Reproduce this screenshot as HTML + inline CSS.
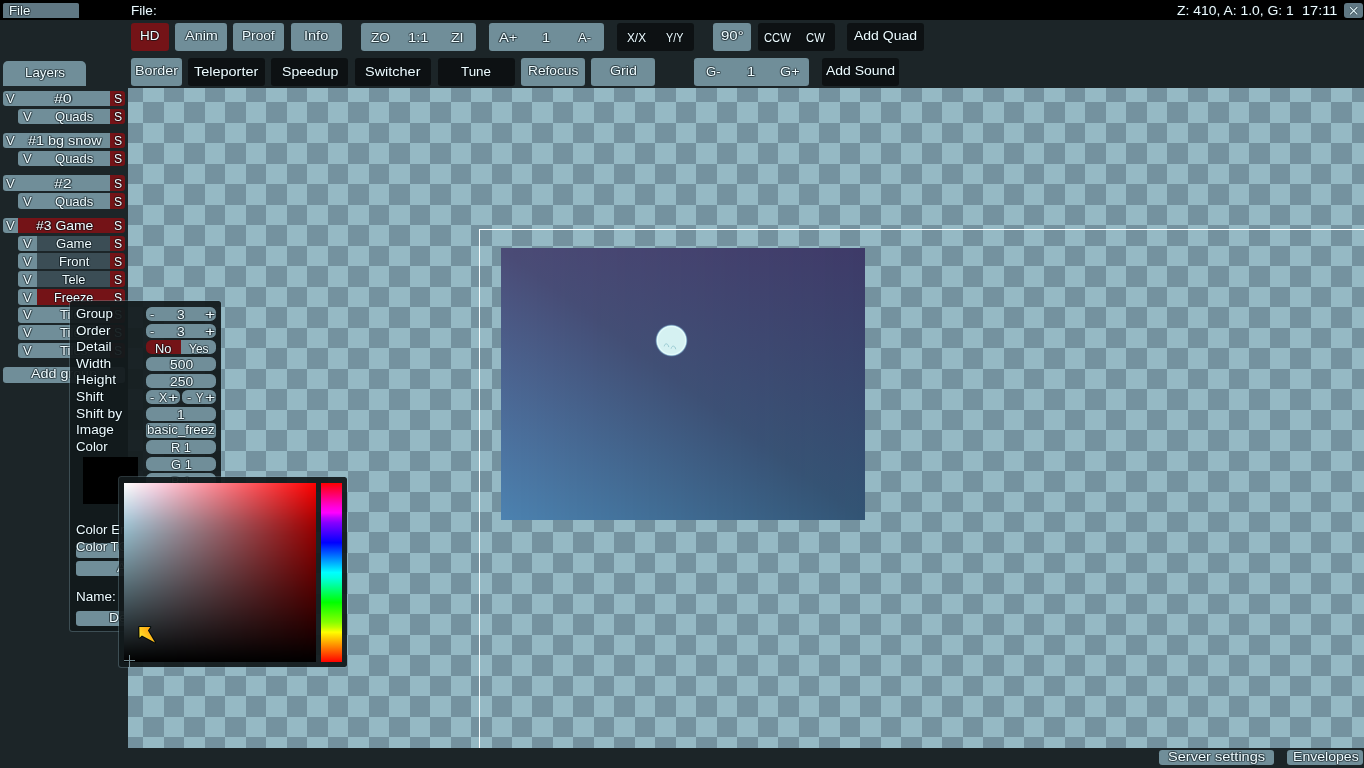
<!DOCTYPE html>
<html lang="en"><head><meta charset="utf-8"><title>DDNet Editor</title><style>
html,body{margin:0;padding:0}
body{width:1364px;height:768px;overflow:hidden;background:#1c2528;position:relative;font-family:"Liberation Sans",sans-serif}
div,span,svg{position:absolute;box-sizing:border-box}
.t{white-space:pre;line-height:15px;color:#eefcff;transform-origin:0 50%;text-shadow:1px 0 0 rgba(8,16,20,.34),-1px 0 0 rgba(8,16,20,.34),0 1px 0 rgba(8,16,20,.34),0 -1px 0 rgba(8,16,20,.34),1px 1px 0 rgba(8,16,20,.22),-1px -1px 0 rgba(8,16,20,.22),1px -1px 0 rgba(8,16,20,.22),-1px 1px 0 rgba(8,16,20,.22)}
.pop{background:rgba(18,25,28,.94);border:1px solid rgba(140,175,190,.30);border-radius:3.5px;background-clip:padding-box}
</style></head>
<body>
<div id="cv" style="left:128px;top:88px;width:1236px;height:660px;background:#95b9c4;overflow:hidden"><svg style="left:0;top:0" width="1236" height="660" shape-rendering="crispEdges"><path fill="#74929f" d="M0 0h15v14h-15zM36 0h20v14h-20zM77 0h20v14h-20zM118 0h20v14h-20zM159 0h20v14h-20zM200 0h20v14h-20zM241 0h20v14h-20zM282 0h20v14h-20zM323 0h20v14h-20zM364 0h20v14h-20zM404 0h21v14h-21zM445 0h21v14h-21zM486 0h21v14h-21zM527 0h21v14h-21zM568 0h21v14h-21zM609 0h21v14h-21zM650 0h21v14h-21zM691 0h21v14h-21zM732 0h21v14h-21zM773 0h21v14h-21zM814 0h21v14h-21zM855 0h21v14h-21zM896 0h20v14h-20zM937 0h20v14h-20zM978 0h20v14h-20zM1019 0h20v14h-20zM1060 0h20v14h-20zM1101 0h20v14h-20zM1142 0h20v14h-20zM1183 0h20v14h-20zM1224 0h12v14h-12zM15 14h21v21h-21zM56 14h21v21h-21zM97 14h21v21h-21zM138 14h21v21h-21zM179 14h21v21h-21zM220 14h21v21h-21zM261 14h21v21h-21zM302 14h21v21h-21zM343 14h21v21h-21zM384 14h20v21h-20zM425 14h20v21h-20zM466 14h20v21h-20zM507 14h20v21h-20zM548 14h20v21h-20zM589 14h20v21h-20zM630 14h20v21h-20zM671 14h20v21h-20zM712 14h20v21h-20zM753 14h20v21h-20zM794 14h20v21h-20zM835 14h20v21h-20zM876 14h20v21h-20zM916 14h21v21h-21zM957 14h21v21h-21zM998 14h21v21h-21zM1039 14h21v21h-21zM1080 14h21v21h-21zM1121 14h21v21h-21zM1162 14h21v21h-21zM1203 14h21v21h-21zM0 35h15v20h-15zM36 35h20v20h-20zM77 35h20v20h-20zM118 35h20v20h-20zM159 35h20v20h-20zM200 35h20v20h-20zM241 35h20v20h-20zM282 35h20v20h-20zM323 35h20v20h-20zM364 35h20v20h-20zM404 35h21v20h-21zM445 35h21v20h-21zM486 35h21v20h-21zM527 35h21v20h-21zM568 35h21v20h-21zM609 35h21v20h-21zM650 35h21v20h-21zM691 35h21v20h-21zM732 35h21v20h-21zM773 35h21v20h-21zM814 35h21v20h-21zM855 35h21v20h-21zM896 35h20v20h-20zM937 35h20v20h-20zM978 35h20v20h-20zM1019 35h20v20h-20zM1060 35h20v20h-20zM1101 35h20v20h-20zM1142 35h20v20h-20zM1183 35h20v20h-20zM1224 35h12v20h-12zM15 55h21v21h-21zM56 55h21v21h-21zM97 55h21v21h-21zM138 55h21v21h-21zM179 55h21v21h-21zM220 55h21v21h-21zM261 55h21v21h-21zM302 55h21v21h-21zM343 55h21v21h-21zM384 55h20v21h-20zM425 55h20v21h-20zM466 55h20v21h-20zM507 55h20v21h-20zM548 55h20v21h-20zM589 55h20v21h-20zM630 55h20v21h-20zM671 55h20v21h-20zM712 55h20v21h-20zM753 55h20v21h-20zM794 55h20v21h-20zM835 55h20v21h-20zM876 55h20v21h-20zM916 55h21v21h-21zM957 55h21v21h-21zM998 55h21v21h-21zM1039 55h21v21h-21zM1080 55h21v21h-21zM1121 55h21v21h-21zM1162 55h21v21h-21zM1203 55h21v21h-21zM0 76h15v20h-15zM36 76h20v20h-20zM77 76h20v20h-20zM118 76h20v20h-20zM159 76h20v20h-20zM200 76h20v20h-20zM241 76h20v20h-20zM282 76h20v20h-20zM323 76h20v20h-20zM364 76h20v20h-20zM404 76h21v20h-21zM445 76h21v20h-21zM486 76h21v20h-21zM527 76h21v20h-21zM568 76h21v20h-21zM609 76h21v20h-21zM650 76h21v20h-21zM691 76h21v20h-21zM732 76h21v20h-21zM773 76h21v20h-21zM814 76h21v20h-21zM855 76h21v20h-21zM896 76h20v20h-20zM937 76h20v20h-20zM978 76h20v20h-20zM1019 76h20v20h-20zM1060 76h20v20h-20zM1101 76h20v20h-20zM1142 76h20v20h-20zM1183 76h20v20h-20zM1224 76h12v20h-12zM15 96h21v21h-21zM56 96h21v21h-21zM97 96h21v21h-21zM138 96h21v21h-21zM179 96h21v21h-21zM220 96h21v21h-21zM261 96h21v21h-21zM302 96h21v21h-21zM343 96h21v21h-21zM384 96h20v21h-20zM425 96h20v21h-20zM466 96h20v21h-20zM507 96h20v21h-20zM548 96h20v21h-20zM589 96h20v21h-20zM630 96h20v21h-20zM671 96h20v21h-20zM712 96h20v21h-20zM753 96h20v21h-20zM794 96h20v21h-20zM835 96h20v21h-20zM876 96h20v21h-20zM916 96h21v21h-21zM957 96h21v21h-21zM998 96h21v21h-21zM1039 96h21v21h-21zM1080 96h21v21h-21zM1121 96h21v21h-21zM1162 96h21v21h-21zM1203 96h21v21h-21zM0 117h15v20h-15zM36 117h20v20h-20zM77 117h20v20h-20zM118 117h20v20h-20zM159 117h20v20h-20zM200 117h20v20h-20zM241 117h20v20h-20zM282 117h20v20h-20zM323 117h20v20h-20zM364 117h20v20h-20zM404 117h21v20h-21zM445 117h21v20h-21zM486 117h21v20h-21zM527 117h21v20h-21zM568 117h21v20h-21zM609 117h21v20h-21zM650 117h21v20h-21zM691 117h21v20h-21zM732 117h21v20h-21zM773 117h21v20h-21zM814 117h21v20h-21zM855 117h21v20h-21zM896 117h20v20h-20zM937 117h20v20h-20zM978 117h20v20h-20zM1019 117h20v20h-20zM1060 117h20v20h-20zM1101 117h20v20h-20zM1142 117h20v20h-20zM1183 117h20v20h-20zM1224 117h12v20h-12zM15 137h21v21h-21zM56 137h21v21h-21zM97 137h21v21h-21zM138 137h21v21h-21zM179 137h21v21h-21zM220 137h21v21h-21zM261 137h21v21h-21zM302 137h21v21h-21zM343 137h21v21h-21zM384 137h20v21h-20zM425 137h20v21h-20zM466 137h20v21h-20zM507 137h20v21h-20zM548 137h20v21h-20zM589 137h20v21h-20zM630 137h20v21h-20zM671 137h20v21h-20zM712 137h20v21h-20zM753 137h20v21h-20zM794 137h20v21h-20zM835 137h20v21h-20zM876 137h20v21h-20zM916 137h21v21h-21zM957 137h21v21h-21zM998 137h21v21h-21zM1039 137h21v21h-21zM1080 137h21v21h-21zM1121 137h21v21h-21zM1162 137h21v21h-21zM1203 137h21v21h-21zM0 158h15v20h-15zM36 158h20v20h-20zM77 158h20v20h-20zM118 158h20v20h-20zM159 158h20v20h-20zM200 158h20v20h-20zM241 158h20v20h-20zM282 158h20v20h-20zM323 158h20v20h-20zM364 158h20v20h-20zM404 158h21v20h-21zM445 158h21v20h-21zM486 158h21v20h-21zM527 158h21v20h-21zM568 158h21v20h-21zM609 158h21v20h-21zM650 158h21v20h-21zM691 158h21v20h-21zM732 158h21v20h-21zM773 158h21v20h-21zM814 158h21v20h-21zM855 158h21v20h-21zM896 158h20v20h-20zM937 158h20v20h-20zM978 158h20v20h-20zM1019 158h20v20h-20zM1060 158h20v20h-20zM1101 158h20v20h-20zM1142 158h20v20h-20zM1183 158h20v20h-20zM1224 158h12v20h-12zM15 178h21v21h-21zM56 178h21v21h-21zM97 178h21v21h-21zM138 178h21v21h-21zM179 178h21v21h-21zM220 178h21v21h-21zM261 178h21v21h-21zM302 178h21v21h-21zM343 178h21v21h-21zM384 178h20v21h-20zM425 178h20v21h-20zM466 178h20v21h-20zM507 178h20v21h-20zM548 178h20v21h-20zM589 178h20v21h-20zM630 178h20v21h-20zM671 178h20v21h-20zM712 178h20v21h-20zM753 178h20v21h-20zM794 178h20v21h-20zM835 178h20v21h-20zM876 178h20v21h-20zM916 178h21v21h-21zM957 178h21v21h-21zM998 178h21v21h-21zM1039 178h21v21h-21zM1080 178h21v21h-21zM1121 178h21v21h-21zM1162 178h21v21h-21zM1203 178h21v21h-21zM0 199h15v20h-15zM36 199h20v20h-20zM77 199h20v20h-20zM118 199h20v20h-20zM159 199h20v20h-20zM200 199h20v20h-20zM241 199h20v20h-20zM282 199h20v20h-20zM323 199h20v20h-20zM364 199h20v20h-20zM404 199h21v20h-21zM445 199h21v20h-21zM486 199h21v20h-21zM527 199h21v20h-21zM568 199h21v20h-21zM609 199h21v20h-21zM650 199h21v20h-21zM691 199h21v20h-21zM732 199h21v20h-21zM773 199h21v20h-21zM814 199h21v20h-21zM855 199h21v20h-21zM896 199h20v20h-20zM937 199h20v20h-20zM978 199h20v20h-20zM1019 199h20v20h-20zM1060 199h20v20h-20zM1101 199h20v20h-20zM1142 199h20v20h-20zM1183 199h20v20h-20zM1224 199h12v20h-12zM15 219h21v21h-21zM56 219h21v21h-21zM97 219h21v21h-21zM138 219h21v21h-21zM179 219h21v21h-21zM220 219h21v21h-21zM261 219h21v21h-21zM302 219h21v21h-21zM343 219h21v21h-21zM384 219h20v21h-20zM425 219h20v21h-20zM466 219h20v21h-20zM507 219h20v21h-20zM548 219h20v21h-20zM589 219h20v21h-20zM630 219h20v21h-20zM671 219h20v21h-20zM712 219h20v21h-20zM753 219h20v21h-20zM794 219h20v21h-20zM835 219h20v21h-20zM876 219h20v21h-20zM916 219h21v21h-21zM957 219h21v21h-21zM998 219h21v21h-21zM1039 219h21v21h-21zM1080 219h21v21h-21zM1121 219h21v21h-21zM1162 219h21v21h-21zM1203 219h21v21h-21zM0 240h15v20h-15zM36 240h20v20h-20zM77 240h20v20h-20zM118 240h20v20h-20zM159 240h20v20h-20zM200 240h20v20h-20zM241 240h20v20h-20zM282 240h20v20h-20zM323 240h20v20h-20zM364 240h20v20h-20zM404 240h21v20h-21zM445 240h21v20h-21zM486 240h21v20h-21zM527 240h21v20h-21zM568 240h21v20h-21zM609 240h21v20h-21zM650 240h21v20h-21zM691 240h21v20h-21zM732 240h21v20h-21zM773 240h21v20h-21zM814 240h21v20h-21zM855 240h21v20h-21zM896 240h20v20h-20zM937 240h20v20h-20zM978 240h20v20h-20zM1019 240h20v20h-20zM1060 240h20v20h-20zM1101 240h20v20h-20zM1142 240h20v20h-20zM1183 240h20v20h-20zM1224 240h12v20h-12zM15 260h21v21h-21zM56 260h21v21h-21zM97 260h21v21h-21zM138 260h21v21h-21zM179 260h21v21h-21zM220 260h21v21h-21zM261 260h21v21h-21zM302 260h21v21h-21zM343 260h21v21h-21zM384 260h20v21h-20zM425 260h20v21h-20zM466 260h20v21h-20zM507 260h20v21h-20zM548 260h20v21h-20zM589 260h20v21h-20zM630 260h20v21h-20zM671 260h20v21h-20zM712 260h20v21h-20zM753 260h20v21h-20zM794 260h20v21h-20zM835 260h20v21h-20zM876 260h20v21h-20zM916 260h21v21h-21zM957 260h21v21h-21zM998 260h21v21h-21zM1039 260h21v21h-21zM1080 260h21v21h-21zM1121 260h21v21h-21zM1162 260h21v21h-21zM1203 260h21v21h-21zM0 281h15v20h-15zM36 281h20v20h-20zM77 281h20v20h-20zM118 281h20v20h-20zM159 281h20v20h-20zM200 281h20v20h-20zM241 281h20v20h-20zM282 281h20v20h-20zM323 281h20v20h-20zM364 281h20v20h-20zM404 281h21v20h-21zM445 281h21v20h-21zM486 281h21v20h-21zM527 281h21v20h-21zM568 281h21v20h-21zM609 281h21v20h-21zM650 281h21v20h-21zM691 281h21v20h-21zM732 281h21v20h-21zM773 281h21v20h-21zM814 281h21v20h-21zM855 281h21v20h-21zM896 281h20v20h-20zM937 281h20v20h-20zM978 281h20v20h-20zM1019 281h20v20h-20zM1060 281h20v20h-20zM1101 281h20v20h-20zM1142 281h20v20h-20zM1183 281h20v20h-20zM1224 281h12v20h-12zM15 301h21v21h-21zM56 301h21v21h-21zM97 301h21v21h-21zM138 301h21v21h-21zM179 301h21v21h-21zM220 301h21v21h-21zM261 301h21v21h-21zM302 301h21v21h-21zM343 301h21v21h-21zM384 301h20v21h-20zM425 301h20v21h-20zM466 301h20v21h-20zM507 301h20v21h-20zM548 301h20v21h-20zM589 301h20v21h-20zM630 301h20v21h-20zM671 301h20v21h-20zM712 301h20v21h-20zM753 301h20v21h-20zM794 301h20v21h-20zM835 301h20v21h-20zM876 301h20v21h-20zM916 301h21v21h-21zM957 301h21v21h-21zM998 301h21v21h-21zM1039 301h21v21h-21zM1080 301h21v21h-21zM1121 301h21v21h-21zM1162 301h21v21h-21zM1203 301h21v21h-21zM0 322h15v20h-15zM36 322h20v20h-20zM77 322h20v20h-20zM118 322h20v20h-20zM159 322h20v20h-20zM200 322h20v20h-20zM241 322h20v20h-20zM282 322h20v20h-20zM323 322h20v20h-20zM364 322h20v20h-20zM404 322h21v20h-21zM445 322h21v20h-21zM486 322h21v20h-21zM527 322h21v20h-21zM568 322h21v20h-21zM609 322h21v20h-21zM650 322h21v20h-21zM691 322h21v20h-21zM732 322h21v20h-21zM773 322h21v20h-21zM814 322h21v20h-21zM855 322h21v20h-21zM896 322h20v20h-20zM937 322h20v20h-20zM978 322h20v20h-20zM1019 322h20v20h-20zM1060 322h20v20h-20zM1101 322h20v20h-20zM1142 322h20v20h-20zM1183 322h20v20h-20zM1224 322h12v20h-12zM15 342h21v21h-21zM56 342h21v21h-21zM97 342h21v21h-21zM138 342h21v21h-21zM179 342h21v21h-21zM220 342h21v21h-21zM261 342h21v21h-21zM302 342h21v21h-21zM343 342h21v21h-21zM384 342h20v21h-20zM425 342h20v21h-20zM466 342h20v21h-20zM507 342h20v21h-20zM548 342h20v21h-20zM589 342h20v21h-20zM630 342h20v21h-20zM671 342h20v21h-20zM712 342h20v21h-20zM753 342h20v21h-20zM794 342h20v21h-20zM835 342h20v21h-20zM876 342h20v21h-20zM916 342h21v21h-21zM957 342h21v21h-21zM998 342h21v21h-21zM1039 342h21v21h-21zM1080 342h21v21h-21zM1121 342h21v21h-21zM1162 342h21v21h-21zM1203 342h21v21h-21zM0 363h15v20h-15zM36 363h20v20h-20zM77 363h20v20h-20zM118 363h20v20h-20zM159 363h20v20h-20zM200 363h20v20h-20zM241 363h20v20h-20zM282 363h20v20h-20zM323 363h20v20h-20zM364 363h20v20h-20zM404 363h21v20h-21zM445 363h21v20h-21zM486 363h21v20h-21zM527 363h21v20h-21zM568 363h21v20h-21zM609 363h21v20h-21zM650 363h21v20h-21zM691 363h21v20h-21zM732 363h21v20h-21zM773 363h21v20h-21zM814 363h21v20h-21zM855 363h21v20h-21zM896 363h20v20h-20zM937 363h20v20h-20zM978 363h20v20h-20zM1019 363h20v20h-20zM1060 363h20v20h-20zM1101 363h20v20h-20zM1142 363h20v20h-20zM1183 363h20v20h-20zM1224 363h12v20h-12zM15 383h21v21h-21zM56 383h21v21h-21zM97 383h21v21h-21zM138 383h21v21h-21zM179 383h21v21h-21zM220 383h21v21h-21zM261 383h21v21h-21zM302 383h21v21h-21zM343 383h21v21h-21zM384 383h20v21h-20zM425 383h20v21h-20zM466 383h20v21h-20zM507 383h20v21h-20zM548 383h20v21h-20zM589 383h20v21h-20zM630 383h20v21h-20zM671 383h20v21h-20zM712 383h20v21h-20zM753 383h20v21h-20zM794 383h20v21h-20zM835 383h20v21h-20zM876 383h20v21h-20zM916 383h21v21h-21zM957 383h21v21h-21zM998 383h21v21h-21zM1039 383h21v21h-21zM1080 383h21v21h-21zM1121 383h21v21h-21zM1162 383h21v21h-21zM1203 383h21v21h-21zM0 404h15v20h-15zM36 404h20v20h-20zM77 404h20v20h-20zM118 404h20v20h-20zM159 404h20v20h-20zM200 404h20v20h-20zM241 404h20v20h-20zM282 404h20v20h-20zM323 404h20v20h-20zM364 404h20v20h-20zM404 404h21v20h-21zM445 404h21v20h-21zM486 404h21v20h-21zM527 404h21v20h-21zM568 404h21v20h-21zM609 404h21v20h-21zM650 404h21v20h-21zM691 404h21v20h-21zM732 404h21v20h-21zM773 404h21v20h-21zM814 404h21v20h-21zM855 404h21v20h-21zM896 404h20v20h-20zM937 404h20v20h-20zM978 404h20v20h-20zM1019 404h20v20h-20zM1060 404h20v20h-20zM1101 404h20v20h-20zM1142 404h20v20h-20zM1183 404h20v20h-20zM1224 404h12v20h-12zM15 424h21v20h-21zM56 424h21v20h-21zM97 424h21v20h-21zM138 424h21v20h-21zM179 424h21v20h-21zM220 424h21v20h-21zM261 424h21v20h-21zM302 424h21v20h-21zM343 424h21v20h-21zM384 424h20v20h-20zM425 424h20v20h-20zM466 424h20v20h-20zM507 424h20v20h-20zM548 424h20v20h-20zM589 424h20v20h-20zM630 424h20v20h-20zM671 424h20v20h-20zM712 424h20v20h-20zM753 424h20v20h-20zM794 424h20v20h-20zM835 424h20v20h-20zM876 424h20v20h-20zM916 424h21v20h-21zM957 424h21v20h-21zM998 424h21v20h-21zM1039 424h21v20h-21zM1080 424h21v20h-21zM1121 424h21v20h-21zM1162 424h21v20h-21zM1203 424h21v20h-21zM0 444h15v21h-15zM36 444h20v21h-20zM77 444h20v21h-20zM118 444h20v21h-20zM159 444h20v21h-20zM200 444h20v21h-20zM241 444h20v21h-20zM282 444h20v21h-20zM323 444h20v21h-20zM364 444h20v21h-20zM404 444h21v21h-21zM445 444h21v21h-21zM486 444h21v21h-21zM527 444h21v21h-21zM568 444h21v21h-21zM609 444h21v21h-21zM650 444h21v21h-21zM691 444h21v21h-21zM732 444h21v21h-21zM773 444h21v21h-21zM814 444h21v21h-21zM855 444h21v21h-21zM896 444h20v21h-20zM937 444h20v21h-20zM978 444h20v21h-20zM1019 444h20v21h-20zM1060 444h20v21h-20zM1101 444h20v21h-20zM1142 444h20v21h-20zM1183 444h20v21h-20zM1224 444h12v21h-12zM15 465h21v20h-21zM56 465h21v20h-21zM97 465h21v20h-21zM138 465h21v20h-21zM179 465h21v20h-21zM220 465h21v20h-21zM261 465h21v20h-21zM302 465h21v20h-21zM343 465h21v20h-21zM384 465h20v20h-20zM425 465h20v20h-20zM466 465h20v20h-20zM507 465h20v20h-20zM548 465h20v20h-20zM589 465h20v20h-20zM630 465h20v20h-20zM671 465h20v20h-20zM712 465h20v20h-20zM753 465h20v20h-20zM794 465h20v20h-20zM835 465h20v20h-20zM876 465h20v20h-20zM916 465h21v20h-21zM957 465h21v20h-21zM998 465h21v20h-21zM1039 465h21v20h-21zM1080 465h21v20h-21zM1121 465h21v20h-21zM1162 465h21v20h-21zM1203 465h21v20h-21zM0 485h15v21h-15zM36 485h20v21h-20zM77 485h20v21h-20zM118 485h20v21h-20zM159 485h20v21h-20zM200 485h20v21h-20zM241 485h20v21h-20zM282 485h20v21h-20zM323 485h20v21h-20zM364 485h20v21h-20zM404 485h21v21h-21zM445 485h21v21h-21zM486 485h21v21h-21zM527 485h21v21h-21zM568 485h21v21h-21zM609 485h21v21h-21zM650 485h21v21h-21zM691 485h21v21h-21zM732 485h21v21h-21zM773 485h21v21h-21zM814 485h21v21h-21zM855 485h21v21h-21zM896 485h20v21h-20zM937 485h20v21h-20zM978 485h20v21h-20zM1019 485h20v21h-20zM1060 485h20v21h-20zM1101 485h20v21h-20zM1142 485h20v21h-20zM1183 485h20v21h-20zM1224 485h12v21h-12zM15 506h21v20h-21zM56 506h21v20h-21zM97 506h21v20h-21zM138 506h21v20h-21zM179 506h21v20h-21zM220 506h21v20h-21zM261 506h21v20h-21zM302 506h21v20h-21zM343 506h21v20h-21zM384 506h20v20h-20zM425 506h20v20h-20zM466 506h20v20h-20zM507 506h20v20h-20zM548 506h20v20h-20zM589 506h20v20h-20zM630 506h20v20h-20zM671 506h20v20h-20zM712 506h20v20h-20zM753 506h20v20h-20zM794 506h20v20h-20zM835 506h20v20h-20zM876 506h20v20h-20zM916 506h21v20h-21zM957 506h21v20h-21zM998 506h21v20h-21zM1039 506h21v20h-21zM1080 506h21v20h-21zM1121 506h21v20h-21zM1162 506h21v20h-21zM1203 506h21v20h-21zM0 526h15v21h-15zM36 526h20v21h-20zM77 526h20v21h-20zM118 526h20v21h-20zM159 526h20v21h-20zM200 526h20v21h-20zM241 526h20v21h-20zM282 526h20v21h-20zM323 526h20v21h-20zM364 526h20v21h-20zM404 526h21v21h-21zM445 526h21v21h-21zM486 526h21v21h-21zM527 526h21v21h-21zM568 526h21v21h-21zM609 526h21v21h-21zM650 526h21v21h-21zM691 526h21v21h-21zM732 526h21v21h-21zM773 526h21v21h-21zM814 526h21v21h-21zM855 526h21v21h-21zM896 526h20v21h-20zM937 526h20v21h-20zM978 526h20v21h-20zM1019 526h20v21h-20zM1060 526h20v21h-20zM1101 526h20v21h-20zM1142 526h20v21h-20zM1183 526h20v21h-20zM1224 526h12v21h-12zM15 547h21v20h-21zM56 547h21v20h-21zM97 547h21v20h-21zM138 547h21v20h-21zM179 547h21v20h-21zM220 547h21v20h-21zM261 547h21v20h-21zM302 547h21v20h-21zM343 547h21v20h-21zM384 547h20v20h-20zM425 547h20v20h-20zM466 547h20v20h-20zM507 547h20v20h-20zM548 547h20v20h-20zM589 547h20v20h-20zM630 547h20v20h-20zM671 547h20v20h-20zM712 547h20v20h-20zM753 547h20v20h-20zM794 547h20v20h-20zM835 547h20v20h-20zM876 547h20v20h-20zM916 547h21v20h-21zM957 547h21v20h-21zM998 547h21v20h-21zM1039 547h21v20h-21zM1080 547h21v20h-21zM1121 547h21v20h-21zM1162 547h21v20h-21zM1203 547h21v20h-21zM0 567h15v21h-15zM36 567h20v21h-20zM77 567h20v21h-20zM118 567h20v21h-20zM159 567h20v21h-20zM200 567h20v21h-20zM241 567h20v21h-20zM282 567h20v21h-20zM323 567h20v21h-20zM364 567h20v21h-20zM404 567h21v21h-21zM445 567h21v21h-21zM486 567h21v21h-21zM527 567h21v21h-21zM568 567h21v21h-21zM609 567h21v21h-21zM650 567h21v21h-21zM691 567h21v21h-21zM732 567h21v21h-21zM773 567h21v21h-21zM814 567h21v21h-21zM855 567h21v21h-21zM896 567h20v21h-20zM937 567h20v21h-20zM978 567h20v21h-20zM1019 567h20v21h-20zM1060 567h20v21h-20zM1101 567h20v21h-20zM1142 567h20v21h-20zM1183 567h20v21h-20zM1224 567h12v21h-12zM15 588h21v20h-21zM56 588h21v20h-21zM97 588h21v20h-21zM138 588h21v20h-21zM179 588h21v20h-21zM220 588h21v20h-21zM261 588h21v20h-21zM302 588h21v20h-21zM343 588h21v20h-21zM384 588h20v20h-20zM425 588h20v20h-20zM466 588h20v20h-20zM507 588h20v20h-20zM548 588h20v20h-20zM589 588h20v20h-20zM630 588h20v20h-20zM671 588h20v20h-20zM712 588h20v20h-20zM753 588h20v20h-20zM794 588h20v20h-20zM835 588h20v20h-20zM876 588h20v20h-20zM916 588h21v20h-21zM957 588h21v20h-21zM998 588h21v20h-21zM1039 588h21v20h-21zM1080 588h21v20h-21zM1121 588h21v20h-21zM1162 588h21v20h-21zM1203 588h21v20h-21zM0 608h15v21h-15zM36 608h20v21h-20zM77 608h20v21h-20zM118 608h20v21h-20zM159 608h20v21h-20zM200 608h20v21h-20zM241 608h20v21h-20zM282 608h20v21h-20zM323 608h20v21h-20zM364 608h20v21h-20zM404 608h21v21h-21zM445 608h21v21h-21zM486 608h21v21h-21zM527 608h21v21h-21zM568 608h21v21h-21zM609 608h21v21h-21zM650 608h21v21h-21zM691 608h21v21h-21zM732 608h21v21h-21zM773 608h21v21h-21zM814 608h21v21h-21zM855 608h21v21h-21zM896 608h20v21h-20zM937 608h20v21h-20zM978 608h20v21h-20zM1019 608h20v21h-20zM1060 608h20v21h-20zM1101 608h20v21h-20zM1142 608h20v21h-20zM1183 608h20v21h-20zM1224 608h12v21h-12zM15 629h21v20h-21zM56 629h21v20h-21zM97 629h21v20h-21zM138 629h21v20h-21zM179 629h21v20h-21zM220 629h21v20h-21zM261 629h21v20h-21zM302 629h21v20h-21zM343 629h21v20h-21zM384 629h20v20h-20zM425 629h20v20h-20zM466 629h20v20h-20zM507 629h20v20h-20zM548 629h20v20h-20zM589 629h20v20h-20zM630 629h20v20h-20zM671 629h20v20h-20zM712 629h20v20h-20zM753 629h20v20h-20zM794 629h20v20h-20zM835 629h20v20h-20zM876 629h20v20h-20zM916 629h21v20h-21zM957 629h21v20h-21zM998 629h21v20h-21zM1039 629h21v20h-21zM1080 629h21v20h-21zM1121 629h21v20h-21zM1162 629h21v20h-21zM1203 629h21v20h-21zM0 649h15v11h-15zM36 649h20v11h-20zM77 649h20v11h-20zM118 649h20v11h-20zM159 649h20v11h-20zM200 649h20v11h-20zM241 649h20v11h-20zM282 649h20v11h-20zM323 649h20v11h-20zM364 649h20v11h-20zM404 649h21v11h-21zM445 649h21v11h-21zM486 649h21v11h-21zM527 649h21v11h-21zM568 649h21v11h-21zM609 649h21v11h-21zM650 649h21v11h-21zM691 649h21v11h-21zM732 649h21v11h-21zM773 649h21v11h-21zM814 649h21v11h-21zM855 649h21v11h-21zM896 649h20v11h-20zM937 649h20v11h-20zM978 649h20v11h-20zM1019 649h20v11h-20zM1060 649h20v11h-20zM1101 649h20v11h-20zM1142 649h20v11h-20zM1183 649h20v11h-20zM1224 649h12v11h-12z"/></svg><div style="left:351px;top:141px;width:1px;height:519px;background:#fff"></div><div style="left:351px;top:141px;width:885px;height:1px;background:#fff"></div><svg style="left:373px;top:160px" width="364" height="272" shape-rendering="crispEdges"><defs><linearGradient id="q0" x1="0" y1="0" x2="0" y2="1"><stop offset="0" stop-color="#4b4b76"/><stop offset="0.0055" stop-color="#4b4b76"/><stop offset="1" stop-color="#4c82b0"/></linearGradient><linearGradient id="q1" x1="0" y1="0" x2="0" y2="1"><stop offset="0" stop-color="#4b4b76"/><stop offset="0.0165" stop-color="#4b4b76"/><stop offset="1" stop-color="#4c81af"/></linearGradient><linearGradient id="q2" x1="0" y1="0" x2="0" y2="1"><stop offset="0" stop-color="#4b4b76"/><stop offset="0.0275" stop-color="#4a4b76"/><stop offset="1" stop-color="#4b81ae"/></linearGradient><linearGradient id="q3" x1="0" y1="0" x2="0" y2="1"><stop offset="0" stop-color="#4a4a75"/><stop offset="0.0385" stop-color="#4a4b76"/><stop offset="1" stop-color="#4b80ae"/></linearGradient><linearGradient id="q4" x1="0" y1="0" x2="0" y2="1"><stop offset="0" stop-color="#4a4a75"/><stop offset="0.0495" stop-color="#4a4b76"/><stop offset="1" stop-color="#4b80ad"/></linearGradient><linearGradient id="q5" x1="0" y1="0" x2="0" y2="1"><stop offset="0" stop-color="#4a4a75"/><stop offset="0.0604" stop-color="#494c76"/><stop offset="1" stop-color="#4a7fac"/></linearGradient><linearGradient id="q6" x1="0" y1="0" x2="0" y2="1"><stop offset="0" stop-color="#4a4a75"/><stop offset="0.0714" stop-color="#494c76"/><stop offset="1" stop-color="#4a7fac"/></linearGradient><linearGradient id="q7" x1="0" y1="0" x2="0" y2="1"><stop offset="0" stop-color="#4a4a75"/><stop offset="0.0824" stop-color="#494c76"/><stop offset="1" stop-color="#4a7eab"/></linearGradient><linearGradient id="q8" x1="0" y1="0" x2="0" y2="1"><stop offset="0" stop-color="#4a4975"/><stop offset="0.0934" stop-color="#494c76"/><stop offset="1" stop-color="#4a7eaa"/></linearGradient><linearGradient id="q9" x1="0" y1="0" x2="0" y2="1"><stop offset="0" stop-color="#4a4975"/><stop offset="0.1044" stop-color="#484c76"/><stop offset="1" stop-color="#497daa"/></linearGradient><linearGradient id="q10" x1="0" y1="0" x2="0" y2="1"><stop offset="0" stop-color="#4a4974"/><stop offset="0.1154" stop-color="#484c76"/><stop offset="1" stop-color="#497da9"/></linearGradient><linearGradient id="q11" x1="0" y1="0" x2="0" y2="1"><stop offset="0" stop-color="#494974"/><stop offset="0.1264" stop-color="#484c76"/><stop offset="1" stop-color="#497ca8"/></linearGradient><linearGradient id="q12" x1="0" y1="0" x2="0" y2="1"><stop offset="0" stop-color="#494974"/><stop offset="0.1374" stop-color="#484c76"/><stop offset="1" stop-color="#487ca8"/></linearGradient><linearGradient id="q13" x1="0" y1="0" x2="0" y2="1"><stop offset="0" stop-color="#494874"/><stop offset="0.1484" stop-color="#474c76"/><stop offset="1" stop-color="#487ba7"/></linearGradient><linearGradient id="q14" x1="0" y1="0" x2="0" y2="1"><stop offset="0" stop-color="#494874"/><stop offset="0.1593" stop-color="#474c76"/><stop offset="1" stop-color="#487ba6"/></linearGradient><linearGradient id="q15" x1="0" y1="0" x2="0" y2="1"><stop offset="0" stop-color="#494874"/><stop offset="0.1703" stop-color="#474d76"/><stop offset="1" stop-color="#487aa6"/></linearGradient><linearGradient id="q16" x1="0" y1="0" x2="0" y2="1"><stop offset="0" stop-color="#494873"/><stop offset="0.1813" stop-color="#464d76"/><stop offset="1" stop-color="#477aa5"/></linearGradient><linearGradient id="q17" x1="0" y1="0" x2="0" y2="1"><stop offset="0" stop-color="#484873"/><stop offset="0.1923" stop-color="#464d76"/><stop offset="1" stop-color="#4779a4"/></linearGradient><linearGradient id="q18" x1="0" y1="0" x2="0" y2="1"><stop offset="0" stop-color="#484873"/><stop offset="0.2033" stop-color="#464d76"/><stop offset="1" stop-color="#4779a4"/></linearGradient><linearGradient id="q19" x1="0" y1="0" x2="0" y2="1"><stop offset="0" stop-color="#484773"/><stop offset="0.2143" stop-color="#464d76"/><stop offset="1" stop-color="#4678a3"/></linearGradient><linearGradient id="q20" x1="0" y1="0" x2="0" y2="1"><stop offset="0" stop-color="#484773"/><stop offset="0.2253" stop-color="#454d76"/><stop offset="1" stop-color="#4678a2"/></linearGradient><linearGradient id="q21" x1="0" y1="0" x2="0" y2="1"><stop offset="0" stop-color="#484773"/><stop offset="0.2363" stop-color="#454d76"/><stop offset="1" stop-color="#4677a2"/></linearGradient><linearGradient id="q22" x1="0" y1="0" x2="0" y2="1"><stop offset="0" stop-color="#484773"/><stop offset="0.2473" stop-color="#454d76"/><stop offset="1" stop-color="#4677a1"/></linearGradient><linearGradient id="q23" x1="0" y1="0" x2="0" y2="1"><stop offset="0" stop-color="#484772"/><stop offset="0.2582" stop-color="#454d75"/><stop offset="1" stop-color="#4576a1"/></linearGradient><linearGradient id="q24" x1="0" y1="0" x2="0" y2="1"><stop offset="0" stop-color="#484672"/><stop offset="0.2692" stop-color="#444d75"/><stop offset="1" stop-color="#4576a0"/></linearGradient><linearGradient id="q25" x1="0" y1="0" x2="0" y2="1"><stop offset="0" stop-color="#474672"/><stop offset="0.2802" stop-color="#444e75"/><stop offset="1" stop-color="#45759f"/></linearGradient><linearGradient id="q26" x1="0" y1="0" x2="0" y2="1"><stop offset="0" stop-color="#474672"/><stop offset="0.2912" stop-color="#444e75"/><stop offset="1" stop-color="#44759f"/></linearGradient><linearGradient id="q27" x1="0" y1="0" x2="0" y2="1"><stop offset="0" stop-color="#474672"/><stop offset="0.3022" stop-color="#434e75"/><stop offset="1" stop-color="#44749e"/></linearGradient><linearGradient id="q28" x1="0" y1="0" x2="0" y2="1"><stop offset="0" stop-color="#474672"/><stop offset="0.3132" stop-color="#434e75"/><stop offset="1" stop-color="#44749d"/></linearGradient><linearGradient id="q29" x1="0" y1="0" x2="0" y2="1"><stop offset="0" stop-color="#474571"/><stop offset="0.3242" stop-color="#434e75"/><stop offset="1" stop-color="#44739d"/></linearGradient><linearGradient id="q30" x1="0" y1="0" x2="0" y2="1"><stop offset="0" stop-color="#474571"/><stop offset="0.3352" stop-color="#434e75"/><stop offset="1" stop-color="#43739c"/></linearGradient><linearGradient id="q31" x1="0" y1="0" x2="0" y2="1"><stop offset="0" stop-color="#464571"/><stop offset="0.3462" stop-color="#424e75"/><stop offset="1" stop-color="#43729b"/></linearGradient><linearGradient id="q32" x1="0" y1="0" x2="0" y2="1"><stop offset="0" stop-color="#464571"/><stop offset="0.3571" stop-color="#424e75"/><stop offset="1" stop-color="#43729b"/></linearGradient><linearGradient id="q33" x1="0" y1="0" x2="0" y2="1"><stop offset="0" stop-color="#464571"/><stop offset="0.3681" stop-color="#424e75"/><stop offset="1" stop-color="#42719a"/></linearGradient><linearGradient id="q34" x1="0" y1="0" x2="0" y2="1"><stop offset="0" stop-color="#464571"/><stop offset="0.3791" stop-color="#424e75"/><stop offset="1" stop-color="#427199"/></linearGradient><linearGradient id="q35" x1="0" y1="0" x2="0" y2="1"><stop offset="0" stop-color="#464471"/><stop offset="0.3901" stop-color="#414f75"/><stop offset="1" stop-color="#427099"/></linearGradient><linearGradient id="q36" x1="0" y1="0" x2="0" y2="1"><stop offset="0" stop-color="#464470"/><stop offset="0.4011" stop-color="#414f75"/><stop offset="1" stop-color="#427098"/></linearGradient><linearGradient id="q37" x1="0" y1="0" x2="0" y2="1"><stop offset="0" stop-color="#464470"/><stop offset="0.4121" stop-color="#414f75"/><stop offset="1" stop-color="#416f97"/></linearGradient><linearGradient id="q38" x1="0" y1="0" x2="0" y2="1"><stop offset="0" stop-color="#464470"/><stop offset="0.4231" stop-color="#404f75"/><stop offset="1" stop-color="#416f97"/></linearGradient><linearGradient id="q39" x1="0" y1="0" x2="0" y2="1"><stop offset="0" stop-color="#454470"/><stop offset="0.4341" stop-color="#404f75"/><stop offset="1" stop-color="#416e96"/></linearGradient><linearGradient id="q40" x1="0" y1="0" x2="0" y2="1"><stop offset="0" stop-color="#454370"/><stop offset="0.4451" stop-color="#404f75"/><stop offset="1" stop-color="#406e95"/></linearGradient><linearGradient id="q41" x1="0" y1="0" x2="0" y2="1"><stop offset="0" stop-color="#454370"/><stop offset="0.4560" stop-color="#404f75"/><stop offset="1" stop-color="#406d95"/></linearGradient><linearGradient id="q42" x1="0" y1="0" x2="0" y2="1"><stop offset="0" stop-color="#45436f"/><stop offset="0.4670" stop-color="#3f4f75"/><stop offset="1" stop-color="#406d94"/></linearGradient><linearGradient id="q43" x1="0" y1="0" x2="0" y2="1"><stop offset="0" stop-color="#45436f"/><stop offset="0.4780" stop-color="#3f4f75"/><stop offset="1" stop-color="#406c93"/></linearGradient><linearGradient id="q44" x1="0" y1="0" x2="0" y2="1"><stop offset="0" stop-color="#45436f"/><stop offset="0.4890" stop-color="#3f4f75"/><stop offset="1" stop-color="#3f6c93"/></linearGradient><linearGradient id="q45" x1="0" y1="0" x2="0" y2="1"><stop offset="0" stop-color="#44426f"/><stop offset="0.5000" stop-color="#3e5075"/><stop offset="1" stop-color="#3f6b92"/></linearGradient><linearGradient id="q46" x1="0" y1="0" x2="0" y2="1"><stop offset="0" stop-color="#44426f"/><stop offset="0.5110" stop-color="#3e5075"/><stop offset="1" stop-color="#3f6a91"/></linearGradient><linearGradient id="q47" x1="0" y1="0" x2="0" y2="1"><stop offset="0" stop-color="#44426f"/><stop offset="0.5220" stop-color="#3e5075"/><stop offset="1" stop-color="#3e6a91"/></linearGradient><linearGradient id="q48" x1="0" y1="0" x2="0" y2="1"><stop offset="0" stop-color="#44426f"/><stop offset="0.5330" stop-color="#3e5075"/><stop offset="1" stop-color="#3e6990"/></linearGradient><linearGradient id="q49" x1="0" y1="0" x2="0" y2="1"><stop offset="0" stop-color="#44426e"/><stop offset="0.5440" stop-color="#3d5075"/><stop offset="1" stop-color="#3e698f"/></linearGradient><linearGradient id="q50" x1="0" y1="0" x2="0" y2="1"><stop offset="0" stop-color="#44426e"/><stop offset="0.5549" stop-color="#3d5075"/><stop offset="1" stop-color="#3e688f"/></linearGradient><linearGradient id="q51" x1="0" y1="0" x2="0" y2="1"><stop offset="0" stop-color="#44416e"/><stop offset="0.5659" stop-color="#3d5075"/><stop offset="1" stop-color="#3d688e"/></linearGradient><linearGradient id="q52" x1="0" y1="0" x2="0" y2="1"><stop offset="0" stop-color="#44416e"/><stop offset="0.5769" stop-color="#3d5075"/><stop offset="1" stop-color="#3d678d"/></linearGradient><linearGradient id="q53" x1="0" y1="0" x2="0" y2="1"><stop offset="0" stop-color="#43416e"/><stop offset="0.5879" stop-color="#3c5075"/><stop offset="1" stop-color="#3d678d"/></linearGradient><linearGradient id="q54" x1="0" y1="0" x2="0" y2="1"><stop offset="0" stop-color="#43416e"/><stop offset="0.5989" stop-color="#3c5075"/><stop offset="1" stop-color="#3c668c"/></linearGradient><linearGradient id="q55" x1="0" y1="0" x2="0" y2="1"><stop offset="0" stop-color="#43416d"/><stop offset="0.6099" stop-color="#3c5075"/><stop offset="1" stop-color="#3c668b"/></linearGradient><linearGradient id="q56" x1="0" y1="0" x2="0" y2="1"><stop offset="0" stop-color="#43406d"/><stop offset="0.6209" stop-color="#3b5175"/><stop offset="1" stop-color="#3c658b"/></linearGradient><linearGradient id="q57" x1="0" y1="0" x2="0" y2="1"><stop offset="0" stop-color="#43406d"/><stop offset="0.6319" stop-color="#3b5175"/><stop offset="1" stop-color="#3c658a"/></linearGradient><linearGradient id="q58" x1="0" y1="0" x2="0" y2="1"><stop offset="0" stop-color="#43406d"/><stop offset="0.6429" stop-color="#3b5175"/><stop offset="1" stop-color="#3b6489"/></linearGradient><linearGradient id="q59" x1="0" y1="0" x2="0" y2="1"><stop offset="0" stop-color="#42406d"/><stop offset="0.6538" stop-color="#3b5175"/><stop offset="1" stop-color="#3b6489"/></linearGradient><linearGradient id="q60" x1="0" y1="0" x2="0" y2="1"><stop offset="0" stop-color="#42406d"/><stop offset="0.6648" stop-color="#3a5175"/><stop offset="1" stop-color="#3b6388"/></linearGradient><linearGradient id="q61" x1="0" y1="0" x2="0" y2="1"><stop offset="0" stop-color="#42406d"/><stop offset="0.6758" stop-color="#3a5175"/><stop offset="1" stop-color="#3a6387"/></linearGradient><linearGradient id="q62" x1="0" y1="0" x2="0" y2="1"><stop offset="0" stop-color="#423f6c"/><stop offset="0.6868" stop-color="#3a5175"/><stop offset="1" stop-color="#3a6287"/></linearGradient><linearGradient id="q63" x1="0" y1="0" x2="0" y2="1"><stop offset="0" stop-color="#423f6c"/><stop offset="0.6978" stop-color="#3a5175"/><stop offset="1" stop-color="#3a6286"/></linearGradient><linearGradient id="q64" x1="0" y1="0" x2="0" y2="1"><stop offset="0" stop-color="#423f6c"/><stop offset="0.7088" stop-color="#395175"/><stop offset="1" stop-color="#3a6185"/></linearGradient><linearGradient id="q65" x1="0" y1="0" x2="0" y2="1"><stop offset="0" stop-color="#423f6c"/><stop offset="0.7198" stop-color="#395175"/><stop offset="1" stop-color="#396185"/></linearGradient><linearGradient id="q66" x1="0" y1="0" x2="0" y2="1"><stop offset="0" stop-color="#423f6c"/><stop offset="0.7308" stop-color="#395275"/><stop offset="1" stop-color="#396084"/></linearGradient><linearGradient id="q67" x1="0" y1="0" x2="0" y2="1"><stop offset="0" stop-color="#413e6c"/><stop offset="0.7418" stop-color="#385275"/><stop offset="1" stop-color="#396083"/></linearGradient><linearGradient id="q68" x1="0" y1="0" x2="0" y2="1"><stop offset="0" stop-color="#413e6b"/><stop offset="0.7527" stop-color="#385274"/><stop offset="1" stop-color="#385f83"/></linearGradient><linearGradient id="q69" x1="0" y1="0" x2="0" y2="1"><stop offset="0" stop-color="#413e6b"/><stop offset="0.7637" stop-color="#385274"/><stop offset="1" stop-color="#385f82"/></linearGradient><linearGradient id="q70" x1="0" y1="0" x2="0" y2="1"><stop offset="0" stop-color="#413e6b"/><stop offset="0.7747" stop-color="#385274"/><stop offset="1" stop-color="#385e82"/></linearGradient><linearGradient id="q71" x1="0" y1="0" x2="0" y2="1"><stop offset="0" stop-color="#413e6b"/><stop offset="0.7857" stop-color="#375274"/><stop offset="1" stop-color="#385e81"/></linearGradient><linearGradient id="q72" x1="0" y1="0" x2="0" y2="1"><stop offset="0" stop-color="#413d6b"/><stop offset="0.7967" stop-color="#375274"/><stop offset="1" stop-color="#375d80"/></linearGradient><linearGradient id="q73" x1="0" y1="0" x2="0" y2="1"><stop offset="0" stop-color="#403d6b"/><stop offset="0.8077" stop-color="#375274"/><stop offset="1" stop-color="#375d80"/></linearGradient><linearGradient id="q74" x1="0" y1="0" x2="0" y2="1"><stop offset="0" stop-color="#403d6b"/><stop offset="0.8187" stop-color="#375274"/><stop offset="1" stop-color="#375c7f"/></linearGradient><linearGradient id="q75" x1="0" y1="0" x2="0" y2="1"><stop offset="0" stop-color="#403d6a"/><stop offset="0.8297" stop-color="#365274"/><stop offset="1" stop-color="#365c7e"/></linearGradient><linearGradient id="q76" x1="0" y1="0" x2="0" y2="1"><stop offset="0" stop-color="#403d6a"/><stop offset="0.8407" stop-color="#365374"/><stop offset="1" stop-color="#365b7e"/></linearGradient><linearGradient id="q77" x1="0" y1="0" x2="0" y2="1"><stop offset="0" stop-color="#403d6a"/><stop offset="0.8516" stop-color="#365374"/><stop offset="1" stop-color="#365b7d"/></linearGradient><linearGradient id="q78" x1="0" y1="0" x2="0" y2="1"><stop offset="0" stop-color="#403c6a"/><stop offset="0.8626" stop-color="#355374"/><stop offset="1" stop-color="#365a7c"/></linearGradient><linearGradient id="q79" x1="0" y1="0" x2="0" y2="1"><stop offset="0" stop-color="#403c6a"/><stop offset="0.8736" stop-color="#355374"/><stop offset="1" stop-color="#355a7c"/></linearGradient><linearGradient id="q80" x1="0" y1="0" x2="0" y2="1"><stop offset="0" stop-color="#403c6a"/><stop offset="0.8846" stop-color="#355374"/><stop offset="1" stop-color="#35597b"/></linearGradient><linearGradient id="q81" x1="0" y1="0" x2="0" y2="1"><stop offset="0" stop-color="#3f3c69"/><stop offset="0.8956" stop-color="#355374"/><stop offset="1" stop-color="#35597a"/></linearGradient><linearGradient id="q82" x1="0" y1="0" x2="0" y2="1"><stop offset="0" stop-color="#3f3c69"/><stop offset="0.9066" stop-color="#345374"/><stop offset="1" stop-color="#34587a"/></linearGradient><linearGradient id="q83" x1="0" y1="0" x2="0" y2="1"><stop offset="0" stop-color="#3f3b69"/><stop offset="0.9176" stop-color="#345374"/><stop offset="1" stop-color="#345879"/></linearGradient><linearGradient id="q84" x1="0" y1="0" x2="0" y2="1"><stop offset="0" stop-color="#3f3b69"/><stop offset="0.9286" stop-color="#345374"/><stop offset="1" stop-color="#345778"/></linearGradient><linearGradient id="q85" x1="0" y1="0" x2="0" y2="1"><stop offset="0" stop-color="#3f3b69"/><stop offset="0.9396" stop-color="#345374"/><stop offset="1" stop-color="#345778"/></linearGradient><linearGradient id="q86" x1="0" y1="0" x2="0" y2="1"><stop offset="0" stop-color="#3f3b69"/><stop offset="0.9505" stop-color="#335474"/><stop offset="1" stop-color="#335677"/></linearGradient><linearGradient id="q87" x1="0" y1="0" x2="0" y2="1"><stop offset="0" stop-color="#3e3b69"/><stop offset="0.9615" stop-color="#335474"/><stop offset="1" stop-color="#335676"/></linearGradient><linearGradient id="q88" x1="0" y1="0" x2="0" y2="1"><stop offset="0" stop-color="#3e3a68"/><stop offset="0.9725" stop-color="#335474"/><stop offset="1" stop-color="#335576"/></linearGradient><linearGradient id="q89" x1="0" y1="0" x2="0" y2="1"><stop offset="0" stop-color="#3e3a68"/><stop offset="0.9835" stop-color="#325474"/><stop offset="1" stop-color="#325575"/></linearGradient><linearGradient id="q90" x1="0" y1="0" x2="0" y2="1"><stop offset="0" stop-color="#3e3a68"/><stop offset="0.9945" stop-color="#325474"/><stop offset="1" stop-color="#325474"/></linearGradient></defs><rect x="0" y="0" width="4" height="272" fill="url(#q0)"/><rect x="4" y="0" width="4" height="272" fill="url(#q1)"/><rect x="8" y="0" width="4" height="272" fill="url(#q2)"/><rect x="12" y="0" width="4" height="272" fill="url(#q3)"/><rect x="16" y="0" width="4" height="272" fill="url(#q4)"/><rect x="20" y="0" width="4" height="272" fill="url(#q5)"/><rect x="24" y="0" width="4" height="272" fill="url(#q6)"/><rect x="28" y="0" width="4" height="272" fill="url(#q7)"/><rect x="32" y="0" width="4" height="272" fill="url(#q8)"/><rect x="36" y="0" width="4" height="272" fill="url(#q9)"/><rect x="40" y="0" width="4" height="272" fill="url(#q10)"/><rect x="44" y="0" width="4" height="272" fill="url(#q11)"/><rect x="48" y="0" width="4" height="272" fill="url(#q12)"/><rect x="52" y="0" width="4" height="272" fill="url(#q13)"/><rect x="56" y="0" width="4" height="272" fill="url(#q14)"/><rect x="60" y="0" width="4" height="272" fill="url(#q15)"/><rect x="64" y="0" width="4" height="272" fill="url(#q16)"/><rect x="68" y="0" width="4" height="272" fill="url(#q17)"/><rect x="72" y="0" width="4" height="272" fill="url(#q18)"/><rect x="76" y="0" width="4" height="272" fill="url(#q19)"/><rect x="80" y="0" width="4" height="272" fill="url(#q20)"/><rect x="84" y="0" width="4" height="272" fill="url(#q21)"/><rect x="88" y="0" width="4" height="272" fill="url(#q22)"/><rect x="92" y="0" width="4" height="272" fill="url(#q23)"/><rect x="96" y="0" width="4" height="272" fill="url(#q24)"/><rect x="100" y="0" width="4" height="272" fill="url(#q25)"/><rect x="104" y="0" width="4" height="272" fill="url(#q26)"/><rect x="108" y="0" width="4" height="272" fill="url(#q27)"/><rect x="112" y="0" width="4" height="272" fill="url(#q28)"/><rect x="116" y="0" width="4" height="272" fill="url(#q29)"/><rect x="120" y="0" width="4" height="272" fill="url(#q30)"/><rect x="124" y="0" width="4" height="272" fill="url(#q31)"/><rect x="128" y="0" width="4" height="272" fill="url(#q32)"/><rect x="132" y="0" width="4" height="272" fill="url(#q33)"/><rect x="136" y="0" width="4" height="272" fill="url(#q34)"/><rect x="140" y="0" width="4" height="272" fill="url(#q35)"/><rect x="144" y="0" width="4" height="272" fill="url(#q36)"/><rect x="148" y="0" width="4" height="272" fill="url(#q37)"/><rect x="152" y="0" width="4" height="272" fill="url(#q38)"/><rect x="156" y="0" width="4" height="272" fill="url(#q39)"/><rect x="160" y="0" width="4" height="272" fill="url(#q40)"/><rect x="164" y="0" width="4" height="272" fill="url(#q41)"/><rect x="168" y="0" width="4" height="272" fill="url(#q42)"/><rect x="172" y="0" width="4" height="272" fill="url(#q43)"/><rect x="176" y="0" width="4" height="272" fill="url(#q44)"/><rect x="180" y="0" width="4" height="272" fill="url(#q45)"/><rect x="184" y="0" width="4" height="272" fill="url(#q46)"/><rect x="188" y="0" width="4" height="272" fill="url(#q47)"/><rect x="192" y="0" width="4" height="272" fill="url(#q48)"/><rect x="196" y="0" width="4" height="272" fill="url(#q49)"/><rect x="200" y="0" width="4" height="272" fill="url(#q50)"/><rect x="204" y="0" width="4" height="272" fill="url(#q51)"/><rect x="208" y="0" width="4" height="272" fill="url(#q52)"/><rect x="212" y="0" width="4" height="272" fill="url(#q53)"/><rect x="216" y="0" width="4" height="272" fill="url(#q54)"/><rect x="220" y="0" width="4" height="272" fill="url(#q55)"/><rect x="224" y="0" width="4" height="272" fill="url(#q56)"/><rect x="228" y="0" width="4" height="272" fill="url(#q57)"/><rect x="232" y="0" width="4" height="272" fill="url(#q58)"/><rect x="236" y="0" width="4" height="272" fill="url(#q59)"/><rect x="240" y="0" width="4" height="272" fill="url(#q60)"/><rect x="244" y="0" width="4" height="272" fill="url(#q61)"/><rect x="248" y="0" width="4" height="272" fill="url(#q62)"/><rect x="252" y="0" width="4" height="272" fill="url(#q63)"/><rect x="256" y="0" width="4" height="272" fill="url(#q64)"/><rect x="260" y="0" width="4" height="272" fill="url(#q65)"/><rect x="264" y="0" width="4" height="272" fill="url(#q66)"/><rect x="268" y="0" width="4" height="272" fill="url(#q67)"/><rect x="272" y="0" width="4" height="272" fill="url(#q68)"/><rect x="276" y="0" width="4" height="272" fill="url(#q69)"/><rect x="280" y="0" width="4" height="272" fill="url(#q70)"/><rect x="284" y="0" width="4" height="272" fill="url(#q71)"/><rect x="288" y="0" width="4" height="272" fill="url(#q72)"/><rect x="292" y="0" width="4" height="272" fill="url(#q73)"/><rect x="296" y="0" width="4" height="272" fill="url(#q74)"/><rect x="300" y="0" width="4" height="272" fill="url(#q75)"/><rect x="304" y="0" width="4" height="272" fill="url(#q76)"/><rect x="308" y="0" width="4" height="272" fill="url(#q77)"/><rect x="312" y="0" width="4" height="272" fill="url(#q78)"/><rect x="316" y="0" width="4" height="272" fill="url(#q79)"/><rect x="320" y="0" width="4" height="272" fill="url(#q80)"/><rect x="324" y="0" width="4" height="272" fill="url(#q81)"/><rect x="328" y="0" width="4" height="272" fill="url(#q82)"/><rect x="332" y="0" width="4" height="272" fill="url(#q83)"/><rect x="336" y="0" width="4" height="272" fill="url(#q84)"/><rect x="340" y="0" width="4" height="272" fill="url(#q85)"/><rect x="344" y="0" width="4" height="272" fill="url(#q86)"/><rect x="348" y="0" width="4" height="272" fill="url(#q87)"/><rect x="352" y="0" width="4" height="272" fill="url(#q88)"/><rect x="356" y="0" width="4" height="272" fill="url(#q89)"/><rect x="360" y="0" width="4" height="272" fill="url(#q90)"/></svg><div style="left:526.7px;top:235.6px;width:33.6px;height:33.6px;border-radius:50%;background:radial-gradient(circle closest-side,#d5f1f2 0,#d5f1f2 78%,#e6fbfc 85%,#d8f4f7 88%,rgba(160,210,230,.7) 92%,rgba(120,165,210,.25) 96%,rgba(110,150,200,0) 100%)"></div><svg style="left:534px;top:254px" width="16" height="10" viewBox="662 342 16 10"><path d="M664.3 346.0 C664.8 342.9 668.0 342.9 668.7 346.7 M671.2 348.3 C671.8 345.2 675.0 345.2 675.7 348.9" fill="none" stroke="#98c8d1" stroke-width="0.95" stroke-linecap="round"/></svg></div>
<div style="left:0px;top:0px;width:1364px;height:20px;background:#000;"></div>
<div style="left:3px;top:3px;width:76px;height:15px;background:#607884;border-radius:1.8px 1.8px 0px 0px;"></div>
<span class="t" style="left:8.96px;top:3.00px;font-size:13.00px;transform:scaleX(1.0222);">File</span>
<span class="t" style="left:130.56px;top:3.00px;font-size:13.00px;transform:scaleX(1.0476);">File:</span>
<span class="t" style="left:1176.60px;top:4.00px;font-size:12.49px;transform:scaleX(1.1145);">Z: 410, A: 1.0, G: 1</span>
<span class="t" style="left:1301.60px;top:4.00px;font-size:12.49px;transform:scaleX(1.1672);">17:11</span>
<div style="left:1344px;top:3px;width:19px;height:15px;background:#607884;border-radius:3px 3px 3px 3px;"></div>
<svg style="left:1348px;top:5px" width="12" height="12" viewBox="0 0 12 12"><path d="M2.1 2.2 L9.3 9.4 M9.3 2.2 L2.1 9.4" stroke="#1e2a30" stroke-width="2.6" fill="none" opacity=".45"/><path d="M2.1 2.2 L9.3 9.4 M9.3 2.2 L2.1 9.4" stroke="#e4f8fc" stroke-width="1.15" fill="none"/></svg>
<div style="left:131px;top:23px;width:38px;height:28px;background:#741317;border-radius:3.2px 3.2px 3.2px 3.2px;"></div>
<span class="t" style="left:140.02px;top:28.00px;font-size:13.00px;transform:scaleX(1.0373);">HD</span>
<div style="left:175px;top:23px;width:52px;height:28px;background:#708e99;border-radius:3.2px 3.2px 3.2px 3.2px;"></div>
<span class="t" style="left:184.51px;top:28.00px;font-size:13.00px;transform:scaleX(1.1103);">Anim</span>
<div style="left:233px;top:23px;width:51px;height:28px;background:#708e99;border-radius:3.2px 3.2px 3.2px 3.2px;"></div>
<span class="t" style="left:242.24px;top:28.00px;font-size:13.00px;transform:scaleX(1.0504);">Proof</span>
<div style="left:291px;top:23px;width:51px;height:28px;background:#708e99;border-radius:3.2px 3.2px 3.2px 3.2px;"></div>
<span class="t" style="left:304.05px;top:28.00px;font-size:13.00px;transform:scaleX(1.1170);">Info</span>
<div style="left:361px;top:23px;width:38px;height:28px;background:#708e99;border-radius:3.2px 0px 0px 3.2px;"></div>
<span class="t" style="left:370.74px;top:30.00px;font-size:13.00px;transform:scaleX(1.0433);">ZO</span>
<div style="left:399px;top:23px;width:39px;height:28px;background:#708e99;"></div>
<span class="t" style="left:408.26px;top:30.00px;font-size:13.00px;transform:scaleX(1.1395);">1:1</span>
<div style="left:438px;top:23px;width:38px;height:28px;background:#708e99;border-radius:0px 3.2px 3.2px 0px;"></div>
<span class="t" style="left:450.69px;top:30.00px;font-size:13.00px;transform:scaleX(1.0849);">ZI</span>
<div style="left:489px;top:23px;width:38px;height:28px;background:#708e99;border-radius:3.2px 0px 0px 3.2px;"></div>
<span class="t" style="left:498.91px;top:30.00px;font-size:13.00px;transform:scaleX(1.1378);">A+</span>
<div style="left:527px;top:23px;width:39px;height:28px;background:#708e99;"></div>
<span class="t" style="left:542.49px;top:30.00px;font-size:13.00px;transform:scaleX(1.1257);">1</span>
<div style="left:566px;top:23px;width:38px;height:28px;background:#708e99;border-radius:0px 3.2px 3.2px 0px;"></div>
<span class="t" style="left:578.41px;top:30.00px;font-size:13.00px;transform:scaleX(1.0072);">A-</span>
<div style="left:617px;top:23px;width:38px;height:28px;background:#0d1113;border-radius:3.2px 0px 0px 3.2px;"></div>
<span class="t" style="left:626.66px;top:31.00px;font-size:11.98px;transform:scaleX(0.9851);">X/X</span>
<div style="left:655px;top:23px;width:39px;height:28px;background:#0d1113;border-radius:0px 3.2px 3.2px 0px;"></div>
<span class="t" style="left:665.88px;top:31.00px;font-size:11.98px;transform:scaleX(0.8994);">Y/Y</span>
<div style="left:713px;top:23px;width:38px;height:28px;background:#708e99;border-radius:3.2px 3.2px 3.2px 3.2px;"></div>
<span class="t" style="left:720.82px;top:28.00px;font-size:13.00px;transform:scaleX(1.1533);">90°</span>
<div style="left:758px;top:23px;width:38px;height:28px;background:#0d1113;border-radius:3.2px 0px 0px 3.2px;"></div>
<span class="t" style="left:763.53px;top:31.00px;font-size:11.98px;transform:scaleX(0.9396);">CCW</span>
<div style="left:796px;top:23px;width:39px;height:28px;background:#0d1113;border-radius:0px 3.2px 3.2px 0px;"></div>
<span class="t" style="left:805.97px;top:31.00px;font-size:11.98px;transform:scaleX(0.9415);">CW</span>
<div style="left:847px;top:23px;width:77px;height:28px;background:#0d1113;border-radius:3.2px 3.2px 3.2px 3.2px;"></div>
<span class="t" style="left:854.26px;top:28.00px;font-size:13.00px;transform:scaleX(1.0762);">Add Quad</span>
<div style="left:131px;top:58px;width:51px;height:28px;background:#708e99;border-radius:3.2px 3.2px 3.2px 3.2px;"></div>
<span class="t" style="left:134.70px;top:63.00px;font-size:13.00px;transform:scaleX(1.0994);">Border</span>
<div style="left:188px;top:58px;width:77px;height:28px;background:#0d1113;border-radius:3.2px 3.2px 3.2px 3.2px;"></div>
<span class="t" style="left:194.40px;top:64.00px;font-size:13.00px;transform:scaleX(1.1126);">Teleporter</span>
<div style="left:271px;top:58px;width:77px;height:28px;background:#0d1113;border-radius:3.2px 3.2px 3.2px 3.2px;"></div>
<span class="t" style="left:281.58px;top:64.00px;font-size:13.00px;transform:scaleX(1.0826);">Speedup</span>
<div style="left:355px;top:58px;width:76px;height:28px;background:#0d1113;border-radius:3.2px 3.2px 3.2px 3.2px;"></div>
<span class="t" style="left:365.23px;top:64.00px;font-size:13.00px;transform:scaleX(1.1123);">Switcher</span>
<div style="left:438px;top:58px;width:77px;height:28px;background:#0d1113;border-radius:3.2px 3.2px 3.2px 3.2px;"></div>
<span class="t" style="left:461.17px;top:64.00px;font-size:13.00px;transform:scaleX(1.0281);">Tune</span>
<div style="left:521px;top:58px;width:64px;height:28px;background:#708e99;border-radius:3.2px 3.2px 3.2px 3.2px;"></div>
<span class="t" style="left:527.79px;top:63.00px;font-size:13.00px;transform:scaleX(1.0555);">Refocus</span>
<div style="left:591px;top:58px;width:64px;height:28px;background:#708e99;border-radius:3.2px 3.2px 3.2px 3.2px;"></div>
<span class="t" style="left:609.93px;top:63.00px;font-size:13.00px;transform:scaleX(1.0936);">Grid</span>
<div style="left:694px;top:58px;width:38px;height:28px;background:#708e99;border-radius:3.2px 0px 0px 3.2px;"></div>
<span class="t" style="left:705.69px;top:64.00px;font-size:13.00px;transform:scaleX(1.0058);">G-</span>
<div style="left:732px;top:58px;width:39px;height:28px;background:#708e99;"></div>
<span class="t" style="left:747.29px;top:64.00px;font-size:13.00px;transform:scaleX(1.1257);">1</span>
<div style="left:771px;top:58px;width:38px;height:28px;background:#708e99;border-radius:0px 3.2px 3.2px 0px;"></div>
<span class="t" style="left:779.95px;top:64.00px;font-size:13.00px;transform:scaleX(1.1068);">G+</span>
<div style="left:822px;top:58px;width:77px;height:28px;background:#0d1113;border-radius:3.2px 3.2px 3.2px 3.2px;"></div>
<span class="t" style="left:825.58px;top:63.00px;font-size:13.00px;transform:scaleX(1.0748);">Add Sound</span>
<div style="left:3px;top:61px;width:83px;height:25px;background:#708e99;border-radius:5px 5px 0px 0px;"></div>
<span class="t" style="left:24.95px;top:66.00px;font-size:12.19px;transform:scaleX(1.0938);">Layers</span>
<div style="left:3px;top:91px;width:15px;height:15px;background:#708e99;border-radius:3.2px 0px 0px 3.2px;"></div>
<span class="t" style="left:5.86px;top:91.00px;font-size:13.00px;transform:scaleX(1.0097);">V</span>
<div style="left:18px;top:91px;width:92px;height:15px;background:#708e99;"></div>
<span class="t" style="left:54.13px;top:92.00px;font-size:12.19px;transform:scaleX(1.3078);">#0</span>
<div style="left:110px;top:91px;width:15px;height:15px;background:#741317;border-radius:0px 3.2px 3.2px 0px;"></div>
<span class="t" style="left:113.70px;top:91.00px;font-size:13.00px;transform:scaleX(0.9369);">S</span>
<div style="left:18px;top:109px;width:19px;height:15px;background:#708e99;border-radius:3.2px 0px 0px 3.2px;"></div>
<span class="t" style="left:23.14px;top:109.00px;font-size:13.00px;transform:scaleX(1.0097);">V</span>
<div style="left:37px;top:109px;width:73px;height:15px;background:#708e99;"></div>
<span class="t" style="left:54.71px;top:110.00px;font-size:12.19px;transform:scaleX(1.0683);">Quads</span>
<div style="left:110px;top:109px;width:15px;height:15px;background:#741317;border-radius:0px 3.2px 3.2px 0px;"></div>
<span class="t" style="left:113.70px;top:109.00px;font-size:13.00px;transform:scaleX(0.9369);">S</span>
<div style="left:3px;top:133px;width:15px;height:15px;background:#708e99;border-radius:3.2px 0px 0px 3.2px;"></div>
<span class="t" style="left:5.86px;top:133.00px;font-size:13.00px;transform:scaleX(1.0097);">V</span>
<div style="left:18px;top:133px;width:92px;height:15px;background:#708e99;"></div>
<span class="t" style="left:27.77px;top:134.00px;font-size:12.19px;transform:scaleX(1.1816);">#1 bg snow</span>
<div style="left:110px;top:133px;width:15px;height:15px;background:#741317;border-radius:0px 3.2px 3.2px 0px;"></div>
<span class="t" style="left:113.70px;top:133.00px;font-size:13.00px;transform:scaleX(0.9369);">S</span>
<div style="left:18px;top:151px;width:19px;height:15px;background:#708e99;border-radius:3.2px 0px 0px 3.2px;"></div>
<span class="t" style="left:23.14px;top:151.00px;font-size:13.00px;transform:scaleX(1.0097);">V</span>
<div style="left:37px;top:151px;width:73px;height:15px;background:#708e99;"></div>
<span class="t" style="left:54.71px;top:152.00px;font-size:12.19px;transform:scaleX(1.0683);">Quads</span>
<div style="left:110px;top:151px;width:15px;height:15px;background:#741317;border-radius:0px 3.2px 3.2px 0px;"></div>
<span class="t" style="left:113.70px;top:151.00px;font-size:13.00px;transform:scaleX(0.9369);">S</span>
<div style="left:3px;top:175px;width:15px;height:16px;background:#708e99;border-radius:3.2px 0px 0px 3.2px;"></div>
<span class="t" style="left:5.86px;top:176.00px;font-size:13.00px;transform:scaleX(1.0097);">V</span>
<div style="left:18px;top:175px;width:92px;height:16px;background:#708e99;"></div>
<span class="t" style="left:54.13px;top:177.00px;font-size:12.19px;transform:scaleX(1.3078);">#2</span>
<div style="left:110px;top:175px;width:15px;height:16px;background:#741317;border-radius:0px 3.2px 3.2px 0px;"></div>
<span class="t" style="left:113.70px;top:176.00px;font-size:13.00px;transform:scaleX(0.9369);">S</span>
<div style="left:18px;top:193px;width:19px;height:16px;background:#708e99;border-radius:3.2px 0px 0px 3.2px;"></div>
<span class="t" style="left:23.14px;top:194.00px;font-size:13.00px;transform:scaleX(1.0097);">V</span>
<div style="left:37px;top:193px;width:73px;height:16px;background:#708e99;"></div>
<span class="t" style="left:54.71px;top:195.00px;font-size:12.19px;transform:scaleX(1.0683);">Quads</span>
<div style="left:110px;top:193px;width:15px;height:16px;background:#741317;border-radius:0px 3.2px 3.2px 0px;"></div>
<span class="t" style="left:113.70px;top:194.00px;font-size:13.00px;transform:scaleX(0.9369);">S</span>
<div style="left:3px;top:218px;width:15px;height:15px;background:#708e99;border-radius:3.2px 0px 0px 3.2px;"></div>
<span class="t" style="left:5.86px;top:218.00px;font-size:13.00px;transform:scaleX(1.0097);">V</span>
<div style="left:18px;top:218px;width:92px;height:15px;background:#741317;"></div>
<span class="t" style="left:35.91px;top:219.00px;font-size:12.19px;transform:scaleX(1.1444);">#3 Game</span>
<div style="left:110px;top:218px;width:15px;height:15px;background:#741317;border-radius:0px 3.2px 3.2px 0px;"></div>
<span class="t" style="left:113.70px;top:218.00px;font-size:13.00px;transform:scaleX(0.9369);">S</span>
<div style="left:18px;top:236px;width:19px;height:15px;background:#708e99;border-radius:3.2px 0px 0px 3.2px;"></div>
<span class="t" style="left:23.14px;top:236.00px;font-size:13.00px;transform:scaleX(1.0097);">V</span>
<div style="left:37px;top:236px;width:73px;height:15px;background:#3b4d55;"></div>
<span class="t" style="left:55.99px;top:237.00px;font-size:12.19px;transform:scaleX(1.0788);">Game</span>
<div style="left:110px;top:236px;width:15px;height:15px;background:#741317;border-radius:0px 3.2px 3.2px 0px;"></div>
<span class="t" style="left:113.70px;top:236.00px;font-size:13.00px;transform:scaleX(0.9369);">S</span>
<div style="left:18px;top:253px;width:19px;height:16px;background:#708e99;border-radius:3.2px 0px 0px 3.2px;"></div>
<span class="t" style="left:23.14px;top:254.00px;font-size:13.00px;transform:scaleX(1.0097);">V</span>
<div style="left:37px;top:253px;width:73px;height:16px;background:#3b4d55;"></div>
<span class="t" style="left:58.68px;top:255.00px;font-size:12.19px;transform:scaleX(1.0696);">Front</span>
<div style="left:110px;top:253px;width:15px;height:16px;background:#741317;border-radius:0px 3.2px 3.2px 0px;"></div>
<span class="t" style="left:113.70px;top:254.00px;font-size:13.00px;transform:scaleX(0.9369);">S</span>
<div style="left:18px;top:271px;width:19px;height:16px;background:#708e99;border-radius:3.2px 0px 0px 3.2px;"></div>
<span class="t" style="left:23.14px;top:272.00px;font-size:13.00px;transform:scaleX(1.0097);">V</span>
<div style="left:37px;top:271px;width:73px;height:16px;background:#3b4d55;"></div>
<span class="t" style="left:62.17px;top:273.00px;font-size:12.19px;transform:scaleX(1.0489);">Tele</span>
<div style="left:110px;top:271px;width:15px;height:16px;background:#741317;border-radius:0px 3.2px 3.2px 0px;"></div>
<span class="t" style="left:113.70px;top:272.00px;font-size:13.00px;transform:scaleX(0.9369);">S</span>
<div style="left:18px;top:289px;width:19px;height:16px;background:#708e99;border-radius:3.2px 0px 0px 3.2px;"></div>
<span class="t" style="left:23.14px;top:290.00px;font-size:13.00px;transform:scaleX(1.0097);">V</span>
<div style="left:37px;top:289px;width:73px;height:16px;background:#741317;"></div>
<span class="t" style="left:54.27px;top:291.00px;font-size:12.19px;transform:scaleX(1.0346);">Freeze</span>
<div style="left:110px;top:289px;width:15px;height:16px;background:#741317;border-radius:0px 3.2px 3.2px 0px;"></div>
<span class="t" style="left:113.70px;top:290.00px;font-size:13.00px;transform:scaleX(0.9369);">S</span>
<div style="left:18px;top:307px;width:19px;height:16px;background:#708e99;border-radius:3.2px 0px 0px 3.2px;"></div>
<span class="t" style="left:23.14px;top:307.00px;font-size:13.00px;transform:scaleX(1.0097);">V</span>
<div style="left:37px;top:307px;width:73px;height:16px;background:#708e99;"></div>
<span class="t" style="left:60.23px;top:308.00px;font-size:12.19px;transform:scaleX(1.0813);">Tiles</span>
<div style="left:110px;top:307px;width:15px;height:16px;background:#741317;border-radius:0px 3.2px 3.2px 0px;"></div>
<span class="t" style="left:113.70px;top:307.00px;font-size:13.00px;transform:scaleX(0.9369);">S</span>
<div style="left:18px;top:325px;width:19px;height:15px;background:#708e99;border-radius:3.2px 0px 0px 3.2px;"></div>
<span class="t" style="left:23.14px;top:325.00px;font-size:13.00px;transform:scaleX(1.0097);">V</span>
<div style="left:37px;top:325px;width:73px;height:15px;background:#708e99;"></div>
<span class="t" style="left:60.23px;top:326.00px;font-size:12.19px;transform:scaleX(1.0813);">Tiles</span>
<div style="left:110px;top:325px;width:15px;height:15px;background:#741317;border-radius:0px 3.2px 3.2px 0px;"></div>
<span class="t" style="left:113.70px;top:325.00px;font-size:13.00px;transform:scaleX(0.9369);">S</span>
<div style="left:18px;top:343px;width:19px;height:15px;background:#708e99;border-radius:3.2px 0px 0px 3.2px;"></div>
<span class="t" style="left:23.14px;top:343.00px;font-size:13.00px;transform:scaleX(1.0097);">V</span>
<div style="left:37px;top:343px;width:73px;height:15px;background:#708e99;"></div>
<span class="t" style="left:60.23px;top:344.00px;font-size:12.19px;transform:scaleX(1.0813);">Tiles</span>
<div style="left:110px;top:343px;width:15px;height:15px;background:#741317;border-radius:0px 3.2px 3.2px 0px;"></div>
<span class="t" style="left:113.70px;top:343.00px;font-size:13.00px;transform:scaleX(0.9369);">S</span>
<div style="left:3px;top:367px;width:122px;height:16px;background:#708e99;border-radius:3.2px 3.2px 3.2px 3.2px;"></div>
<span class="t" style="left:30.99px;top:366.00px;font-size:13.00px;transform:scaleX(1.1004);">Add group</span>
<div style="left:1159px;top:750px;width:115px;height:15px;background:#708e99;border-radius:3.2px 3.2px 3.2px 3.2px;"></div>
<span class="t" style="left:1167.96px;top:749.00px;font-size:13.00px;transform:scaleX(1.1198);">Server settings</span>
<div style="left:1287px;top:750px;width:76px;height:15px;background:#708e99;border-radius:3.2px 3.2px 3.2px 3.2px;"></div>
<span class="t" style="left:1292.65px;top:749.00px;font-size:13.00px;transform:scaleX(1.0821);">Envelopes</span>
<div class="pop" style="left:69px;top:300px;width:153px;height:332px"></div><span class="t" style="left:75.60px;top:307.00px;font-size:12.19px;transform:scaleX(1.0871);">Group</span>
<span class="t" style="left:75.60px;top:324.00px;font-size:12.19px;transform:scaleX(1.1033);">Order</span>
<span class="t" style="left:75.60px;top:340.00px;font-size:12.19px;transform:scaleX(1.1431);">Detail</span>
<span class="t" style="left:75.60px;top:357.00px;font-size:12.19px;transform:scaleX(1.1279);">Width</span>
<span class="t" style="left:75.60px;top:373.00px;font-size:12.19px;transform:scaleX(1.1348);">Height</span>
<span class="t" style="left:75.60px;top:390.00px;font-size:12.19px;transform:scaleX(1.1272);">Shift</span>
<span class="t" style="left:75.60px;top:407.00px;font-size:12.19px;transform:scaleX(1.1357);">Shift by</span>
<span class="t" style="left:75.60px;top:423.00px;font-size:12.19px;transform:scaleX(1.1183);">Image</span>
<span class="t" style="left:75.60px;top:440.00px;font-size:12.19px;transform:scaleX(1.0843);">Color</span>
<div style="left:146px;top:307px;width:70px;height:14px;background:#708e99;border-radius:5.6px 5.6px 5.6px 5.6px;"></div>
<span class="t" style="left:150.14px;top:308.00px;font-size:12.19px;transform:scaleX(1.0744);">-</span>
<span class="t" style="left:177.21px;top:308.00px;font-size:12.19px;transform:scaleX(1.1349);">3</span>
<span class="t" style="left:204.72px;top:308.00px;font-size:12.19px;transform:scaleX(1.4225);">+</span>
<div style="left:146px;top:324px;width:70px;height:14px;background:#708e99;border-radius:5.6px 5.6px 5.6px 5.6px;"></div>
<span class="t" style="left:150.14px;top:325.00px;font-size:12.19px;transform:scaleX(1.0744);">-</span>
<span class="t" style="left:177.21px;top:325.00px;font-size:12.19px;transform:scaleX(1.1349);">3</span>
<span class="t" style="left:204.72px;top:325.00px;font-size:12.19px;transform:scaleX(1.4225);">+</span>
<div style="left:146px;top:340px;width:35px;height:14px;background:#741317;border-radius:5.6px 0px 0px 5.6px;"></div>
<div style="left:181px;top:340px;width:35px;height:14px;background:#708e99;border-radius:0px 5.6px 5.6px 0px;"></div>
<span class="t" style="left:155.26px;top:342.00px;font-size:12.19px;transform:scaleX(1.0548);">No</span>
<span class="t" style="left:188.86px;top:342.00px;font-size:12.19px;transform:scaleX(0.9817);">Yes</span>
<div style="left:146px;top:357px;width:70px;height:14px;background:#708e99;border-radius:5.6px 5.6px 5.6px 5.6px;"></div>
<span class="t" style="left:169.51px;top:358.00px;font-size:12.19px;transform:scaleX(1.1349);">500</span>
<div style="left:146px;top:374px;width:70px;height:14px;background:#708e99;border-radius:5.6px 5.6px 5.6px 5.6px;"></div>
<span class="t" style="left:169.51px;top:375.00px;font-size:12.19px;transform:scaleX(1.1349);">250</span>
<div style="left:146px;top:390px;width:34px;height:14px;background:#708e99;border-radius:5.6px 5.6px 5.6px 5.6px;"></div>
<div style="left:182px;top:390px;width:34px;height:14px;background:#708e99;border-radius:5.6px 5.6px 5.6px 5.6px;"></div>
<span class="t" style="left:150.14px;top:391.00px;font-size:12.19px;transform:scaleX(1.0744);">-</span>
<span class="t" style="left:158.70px;top:391.00px;font-size:12.19px;transform:scaleX(1.0179);">X</span>
<span class="t" style="left:168.31px;top:391.00px;font-size:12.19px;transform:scaleX(1.4225);">+</span>
<span class="t" style="left:186.55px;top:391.00px;font-size:12.19px;transform:scaleX(1.0744);">-</span>
<span class="t" style="left:195.57px;top:391.00px;font-size:12.19px;transform:scaleX(0.9076);">Y</span>
<span class="t" style="left:204.72px;top:391.00px;font-size:12.19px;transform:scaleX(1.4225);">+</span>
<div style="left:146px;top:407px;width:70px;height:14px;background:#708e99;border-radius:5.6px 5.6px 5.6px 5.6px;"></div>
<span class="t" style="left:177.21px;top:408.00px;font-size:12.19px;transform:scaleX(1.1349);">1</span>
<div style="left:146px;top:423px;width:70px;height:15px;background:#708e99;border-radius:3.2px 3.2px 3.2px 3.2px;"></div>
<span class="t" style="left:147.23px;top:423.00px;font-size:12.19px;transform:scaleX(1.0854);">basic_freez</span>
<div style="left:146px;top:440px;width:70px;height:14px;background:#708e99;border-radius:5.6px 5.6px 5.6px 5.6px;"></div>
<span class="t" style="left:171.08px;top:441.00px;font-size:12.19px;transform:scaleX(1.0515);">R 1</span>
<div style="left:146px;top:457px;width:70px;height:14px;background:#708e99;border-radius:5.6px 5.6px 5.6px 5.6px;"></div>
<span class="t" style="left:170.60px;top:458.00px;font-size:12.19px;transform:scaleX(1.0640);">G 1</span>
<div style="left:146px;top:473px;width:70px;height:14px;background:#708e99;border-radius:5.6px 5.6px 5.6px 5.6px;"></div>
<span class="t" style="left:171.14px;top:475.00px;font-size:12.19px;transform:scaleX(1.0843);">B 1</span>
<div style="left:146px;top:490px;width:70px;height:14px;background:#708e99;border-radius:5.6px 5.6px 5.6px 5.6px;"></div>
<span class="t" style="left:171.15px;top:491.00px;font-size:12.19px;transform:scaleX(1.1243);">A 1</span>
<div style="left:83px;top:457px;width:55px;height:47px;background:#000;"></div>
<div style="left:76px;top:543px;width:140px;height:15px;background:#708e99;border-radius:3.2px 3.2px 3.2px 3.2px;"></div>
<div style="left:76px;top:561px;width:140px;height:15px;background:#708e99;border-radius:3.2px 3.2px 3.2px 3.2px;"></div>
<span class="t" style="left:75.60px;top:523.00px;font-size:12.19px;transform:scaleX(1.0818);">Color Env</span>
<span class="t" style="left:75.60px;top:540.00px;font-size:12.19px;transform:scaleX(1.0681);">Color TO</span>
<span class="t" style="left:116.80px;top:561.00px;font-size:12.19px;transform:scaleX(1.1271);">Auto map</span>
<span class="t" style="left:75.60px;top:590.00px;font-size:12.19px;transform:scaleX(1.1074);">Name:</span>
<div style="left:76px;top:611px;width:140px;height:15px;background:#708e99;border-radius:3.2px 3.2px 3.2px 3.2px;"></div>
<span class="t" style="left:109.23px;top:611.00px;font-size:12.19px;transform:scaleX(1.1366);">Delete layer</span>
<div class="pop" style="left:118px;top:476px;width:230px;height:192px"></div><div style="left:124px;top:483px;width:192px;height:179px;overflow:hidden"><svg style="left:-6px;top:-6px;filter:blur(1.2px)" width="204" height="191"><defs><linearGradient id="p0" x1="0" y1="0" x2="0" y2="1"><stop offset="0.031" stop-color="#ffffff"/><stop offset="0.098" stop-color="#e1edf3"/><stop offset="0.165" stop-color="#c4dbe6"/><stop offset="0.232" stop-color="#a6c8d8"/><stop offset="0.299" stop-color="#90b6c5"/><stop offset="0.366" stop-color="#82a4b1"/><stop offset="0.433" stop-color="#73929d"/><stop offset="0.500" stop-color="#65808a"/><stop offset="0.567" stop-color="#566d76"/><stop offset="0.634" stop-color="#485b62"/><stop offset="0.701" stop-color="#3a494f"/><stop offset="0.768" stop-color="#2b373b"/><stop offset="0.835" stop-color="#1d2427"/><stop offset="0.902" stop-color="#0e1214"/><stop offset="0.969" stop-color="#000000"/></linearGradient><linearGradient id="p1" x1="0" y1="0" x2="0" y2="1"><stop offset="0.031" stop-color="#ffffff"/><stop offset="0.098" stop-color="#e1edf3"/><stop offset="0.165" stop-color="#c4dbe6"/><stop offset="0.232" stop-color="#a6c8d8"/><stop offset="0.299" stop-color="#90b6c5"/><stop offset="0.366" stop-color="#82a4b1"/><stop offset="0.433" stop-color="#73929d"/><stop offset="0.500" stop-color="#65808a"/><stop offset="0.567" stop-color="#566d76"/><stop offset="0.634" stop-color="#485b62"/><stop offset="0.701" stop-color="#3a494f"/><stop offset="0.768" stop-color="#2b373b"/><stop offset="0.835" stop-color="#1d2427"/><stop offset="0.902" stop-color="#0e1214"/><stop offset="0.969" stop-color="#000000"/></linearGradient><linearGradient id="p2" x1="0" y1="0" x2="0" y2="1"><stop offset="0.031" stop-color="#fffdfe"/><stop offset="0.098" stop-color="#e1ebf1"/><stop offset="0.165" stop-color="#c4d9e5"/><stop offset="0.232" stop-color="#a6c7d7"/><stop offset="0.299" stop-color="#90b5c3"/><stop offset="0.366" stop-color="#82a3b0"/><stop offset="0.433" stop-color="#73919c"/><stop offset="0.500" stop-color="#657f89"/><stop offset="0.567" stop-color="#566c75"/><stop offset="0.634" stop-color="#485a62"/><stop offset="0.701" stop-color="#3a484e"/><stop offset="0.768" stop-color="#2b363b"/><stop offset="0.835" stop-color="#1d2427"/><stop offset="0.902" stop-color="#0e1214"/><stop offset="0.969" stop-color="#000000"/></linearGradient><linearGradient id="p3" x1="0" y1="0" x2="0" y2="1"><stop offset="0.031" stop-color="#fff9fb"/><stop offset="0.098" stop-color="#e1e7ef"/><stop offset="0.165" stop-color="#c4d5e3"/><stop offset="0.232" stop-color="#a6c4d3"/><stop offset="0.299" stop-color="#90b2c0"/><stop offset="0.366" stop-color="#82a0ad"/><stop offset="0.433" stop-color="#738e9a"/><stop offset="0.500" stop-color="#657d86"/><stop offset="0.567" stop-color="#566b73"/><stop offset="0.634" stop-color="#485960"/><stop offset="0.701" stop-color="#3a474d"/><stop offset="0.768" stop-color="#2b353a"/><stop offset="0.835" stop-color="#1d2426"/><stop offset="0.902" stop-color="#0e1213"/><stop offset="0.969" stop-color="#000000"/></linearGradient><linearGradient id="p4" x1="0" y1="0" x2="0" y2="1"><stop offset="0.031" stop-color="#fff5f8"/><stop offset="0.098" stop-color="#e1e4ec"/><stop offset="0.165" stop-color="#c4d2e0"/><stop offset="0.232" stop-color="#a6c1d0"/><stop offset="0.299" stop-color="#90afbd"/><stop offset="0.366" stop-color="#829eaa"/><stop offset="0.433" stop-color="#738c97"/><stop offset="0.500" stop-color="#657b84"/><stop offset="0.567" stop-color="#566971"/><stop offset="0.634" stop-color="#48585f"/><stop offset="0.701" stop-color="#3a464c"/><stop offset="0.768" stop-color="#2b3539"/><stop offset="0.835" stop-color="#1d2326"/><stop offset="0.902" stop-color="#0e1213"/><stop offset="0.969" stop-color="#000000"/></linearGradient><linearGradient id="p5" x1="0" y1="0" x2="0" y2="1"><stop offset="0.031" stop-color="#fff1f6"/><stop offset="0.098" stop-color="#e1e0ea"/><stop offset="0.165" stop-color="#c4cfde"/><stop offset="0.232" stop-color="#a6bdcd"/><stop offset="0.299" stop-color="#90acba"/><stop offset="0.366" stop-color="#829ba7"/><stop offset="0.433" stop-color="#738a95"/><stop offset="0.500" stop-color="#657982"/><stop offset="0.567" stop-color="#566770"/><stop offset="0.634" stop-color="#48565d"/><stop offset="0.701" stop-color="#3a454a"/><stop offset="0.768" stop-color="#2b3438"/><stop offset="0.835" stop-color="#1d2225"/><stop offset="0.902" stop-color="#0e1113"/><stop offset="0.969" stop-color="#000000"/></linearGradient><linearGradient id="p6" x1="0" y1="0" x2="0" y2="1"><stop offset="0.031" stop-color="#ffedf3"/><stop offset="0.098" stop-color="#e1dce7"/><stop offset="0.165" stop-color="#c4cbdb"/><stop offset="0.232" stop-color="#a6bac9"/><stop offset="0.299" stop-color="#90a9b7"/><stop offset="0.366" stop-color="#8298a5"/><stop offset="0.433" stop-color="#738792"/><stop offset="0.500" stop-color="#657780"/><stop offset="0.567" stop-color="#56666e"/><stop offset="0.634" stop-color="#48555b"/><stop offset="0.701" stop-color="#3a4449"/><stop offset="0.768" stop-color="#2b3337"/><stop offset="0.835" stop-color="#1d2225"/><stop offset="0.902" stop-color="#0e1112"/><stop offset="0.969" stop-color="#000000"/></linearGradient><linearGradient id="p7" x1="0" y1="0" x2="0" y2="1"><stop offset="0.031" stop-color="#ffe9f0"/><stop offset="0.098" stop-color="#e1d8e5"/><stop offset="0.165" stop-color="#c4c8d8"/><stop offset="0.232" stop-color="#a6b7c6"/><stop offset="0.299" stop-color="#90a6b4"/><stop offset="0.366" stop-color="#8296a2"/><stop offset="0.433" stop-color="#738590"/><stop offset="0.500" stop-color="#65757e"/><stop offset="0.567" stop-color="#56646c"/><stop offset="0.634" stop-color="#48535a"/><stop offset="0.701" stop-color="#3a4348"/><stop offset="0.768" stop-color="#2b3236"/><stop offset="0.835" stop-color="#1d2124"/><stop offset="0.902" stop-color="#0e1112"/><stop offset="0.969" stop-color="#000000"/></linearGradient><linearGradient id="p8" x1="0" y1="0" x2="0" y2="1"><stop offset="0.031" stop-color="#ffe5ed"/><stop offset="0.098" stop-color="#e1d5e2"/><stop offset="0.165" stop-color="#c4c4d4"/><stop offset="0.232" stop-color="#a6b4c2"/><stop offset="0.299" stop-color="#90a4b1"/><stop offset="0.366" stop-color="#82939f"/><stop offset="0.433" stop-color="#73838d"/><stop offset="0.500" stop-color="#65737c"/><stop offset="0.567" stop-color="#56626a"/><stop offset="0.634" stop-color="#485258"/><stop offset="0.701" stop-color="#3a4147"/><stop offset="0.768" stop-color="#2b3135"/><stop offset="0.835" stop-color="#1d2123"/><stop offset="0.902" stop-color="#0e1012"/><stop offset="0.969" stop-color="#000000"/></linearGradient><linearGradient id="p9" x1="0" y1="0" x2="0" y2="1"><stop offset="0.031" stop-color="#ffe1eb"/><stop offset="0.098" stop-color="#e1d1e0"/><stop offset="0.165" stop-color="#c4c1d0"/><stop offset="0.232" stop-color="#a6b1bf"/><stop offset="0.299" stop-color="#90a1ae"/><stop offset="0.366" stop-color="#82919c"/><stop offset="0.433" stop-color="#73818b"/><stop offset="0.500" stop-color="#65717a"/><stop offset="0.567" stop-color="#566068"/><stop offset="0.634" stop-color="#485057"/><stop offset="0.701" stop-color="#3a4045"/><stop offset="0.768" stop-color="#2b3034"/><stop offset="0.835" stop-color="#1d2023"/><stop offset="0.902" stop-color="#0e1011"/><stop offset="0.969" stop-color="#000000"/></linearGradient><linearGradient id="p10" x1="0" y1="0" x2="0" y2="1"><stop offset="0.031" stop-color="#ffdde8"/><stop offset="0.098" stop-color="#e1cddd"/><stop offset="0.165" stop-color="#c4becd"/><stop offset="0.232" stop-color="#a6aebc"/><stop offset="0.299" stop-color="#909eab"/><stop offset="0.366" stop-color="#828e9a"/><stop offset="0.433" stop-color="#737e88"/><stop offset="0.500" stop-color="#656f77"/><stop offset="0.567" stop-color="#565f66"/><stop offset="0.634" stop-color="#484f55"/><stop offset="0.701" stop-color="#3a3f44"/><stop offset="0.768" stop-color="#2b2f33"/><stop offset="0.835" stop-color="#1d2022"/><stop offset="0.902" stop-color="#0e1011"/><stop offset="0.969" stop-color="#000000"/></linearGradient><linearGradient id="p11" x1="0" y1="0" x2="0" y2="1"><stop offset="0.031" stop-color="#ffd9e5"/><stop offset="0.098" stop-color="#e1cada"/><stop offset="0.165" stop-color="#c4bac9"/><stop offset="0.232" stop-color="#a6abb8"/><stop offset="0.299" stop-color="#909ba8"/><stop offset="0.366" stop-color="#828c97"/><stop offset="0.433" stop-color="#737c86"/><stop offset="0.500" stop-color="#656d75"/><stop offset="0.567" stop-color="#565d65"/><stop offset="0.634" stop-color="#484e54"/><stop offset="0.701" stop-color="#3a3e43"/><stop offset="0.768" stop-color="#2b2f32"/><stop offset="0.835" stop-color="#1d1f22"/><stop offset="0.902" stop-color="#0e1011"/><stop offset="0.969" stop-color="#000000"/></linearGradient><linearGradient id="p12" x1="0" y1="0" x2="0" y2="1"><stop offset="0.031" stop-color="#ffd5e3"/><stop offset="0.098" stop-color="#e1c6d6"/><stop offset="0.165" stop-color="#c4b7c5"/><stop offset="0.232" stop-color="#a6a7b5"/><stop offset="0.299" stop-color="#9098a4"/><stop offset="0.366" stop-color="#828994"/><stop offset="0.433" stop-color="#737a84"/><stop offset="0.500" stop-color="#656b73"/><stop offset="0.567" stop-color="#565b63"/><stop offset="0.634" stop-color="#484c52"/><stop offset="0.701" stop-color="#3a3d42"/><stop offset="0.768" stop-color="#2b2e31"/><stop offset="0.835" stop-color="#1d1e21"/><stop offset="0.902" stop-color="#0e0f10"/><stop offset="0.969" stop-color="#000000"/></linearGradient><linearGradient id="p13" x1="0" y1="0" x2="0" y2="1"><stop offset="0.031" stop-color="#ffd1e0"/><stop offset="0.098" stop-color="#e1c2d2"/><stop offset="0.165" stop-color="#c4b3c2"/><stop offset="0.232" stop-color="#a6a4b2"/><stop offset="0.299" stop-color="#9095a1"/><stop offset="0.366" stop-color="#828691"/><stop offset="0.433" stop-color="#737881"/><stop offset="0.500" stop-color="#656971"/><stop offset="0.567" stop-color="#565a61"/><stop offset="0.634" stop-color="#484b51"/><stop offset="0.701" stop-color="#3a3c41"/><stop offset="0.768" stop-color="#2b2d30"/><stop offset="0.835" stop-color="#1d1e20"/><stop offset="0.902" stop-color="#0e0f10"/><stop offset="0.969" stop-color="#000000"/></linearGradient><linearGradient id="p14" x1="0" y1="0" x2="0" y2="1"><stop offset="0.031" stop-color="#ffcddd"/><stop offset="0.098" stop-color="#e1bfce"/><stop offset="0.165" stop-color="#c4b0be"/><stop offset="0.232" stop-color="#a6a1ae"/><stop offset="0.299" stop-color="#90939e"/><stop offset="0.366" stop-color="#82848e"/><stop offset="0.433" stop-color="#73757f"/><stop offset="0.500" stop-color="#65676f"/><stop offset="0.567" stop-color="#56585f"/><stop offset="0.634" stop-color="#48494f"/><stop offset="0.701" stop-color="#3a3b3f"/><stop offset="0.768" stop-color="#2b2c2f"/><stop offset="0.835" stop-color="#1d1d20"/><stop offset="0.902" stop-color="#0e0f10"/><stop offset="0.969" stop-color="#000000"/></linearGradient><linearGradient id="p15" x1="0" y1="0" x2="0" y2="1"><stop offset="0.031" stop-color="#ffc9d9"/><stop offset="0.098" stop-color="#e1bbca"/><stop offset="0.165" stop-color="#c4acba"/><stop offset="0.232" stop-color="#a69eab"/><stop offset="0.299" stop-color="#90909b"/><stop offset="0.366" stop-color="#82818c"/><stop offset="0.433" stop-color="#73737c"/><stop offset="0.500" stop-color="#65656d"/><stop offset="0.567" stop-color="#56565d"/><stop offset="0.634" stop-color="#48484e"/><stop offset="0.701" stop-color="#3a393e"/><stop offset="0.768" stop-color="#2b2b2f"/><stop offset="0.835" stop-color="#1d1d1f"/><stop offset="0.902" stop-color="#0e0e10"/><stop offset="0.969" stop-color="#000000"/></linearGradient><linearGradient id="p16" x1="0" y1="0" x2="0" y2="1"><stop offset="0.031" stop-color="#ffc5d5"/><stop offset="0.098" stop-color="#e1b7c6"/><stop offset="0.165" stop-color="#c4a9b7"/><stop offset="0.232" stop-color="#a69ba7"/><stop offset="0.299" stop-color="#908d98"/><stop offset="0.366" stop-color="#827f89"/><stop offset="0.433" stop-color="#73717a"/><stop offset="0.500" stop-color="#65636b"/><stop offset="0.567" stop-color="#56555b"/><stop offset="0.634" stop-color="#48464c"/><stop offset="0.701" stop-color="#3a383d"/><stop offset="0.768" stop-color="#2b2a2e"/><stop offset="0.835" stop-color="#1d1c1e"/><stop offset="0.902" stop-color="#0e0e0f"/><stop offset="0.969" stop-color="#000000"/></linearGradient><linearGradient id="p17" x1="0" y1="0" x2="0" y2="1"><stop offset="0.031" stop-color="#ffc1d1"/><stop offset="0.098" stop-color="#e1b3c2"/><stop offset="0.165" stop-color="#c4a6b3"/><stop offset="0.232" stop-color="#a698a4"/><stop offset="0.299" stop-color="#908a95"/><stop offset="0.366" stop-color="#827c86"/><stop offset="0.433" stop-color="#736e77"/><stop offset="0.500" stop-color="#656168"/><stop offset="0.567" stop-color="#565359"/><stop offset="0.634" stop-color="#48454b"/><stop offset="0.701" stop-color="#3a373c"/><stop offset="0.768" stop-color="#2b292d"/><stop offset="0.835" stop-color="#1d1c1e"/><stop offset="0.902" stop-color="#0e0e0f"/><stop offset="0.969" stop-color="#000000"/></linearGradient><linearGradient id="p18" x1="0" y1="0" x2="0" y2="1"><stop offset="0.031" stop-color="#ffbdcc"/><stop offset="0.098" stop-color="#e1b0be"/><stop offset="0.165" stop-color="#c4a2af"/><stop offset="0.232" stop-color="#a695a1"/><stop offset="0.299" stop-color="#908792"/><stop offset="0.366" stop-color="#827a83"/><stop offset="0.433" stop-color="#736c75"/><stop offset="0.500" stop-color="#655f66"/><stop offset="0.567" stop-color="#565158"/><stop offset="0.634" stop-color="#484449"/><stop offset="0.701" stop-color="#3a363a"/><stop offset="0.768" stop-color="#2b292c"/><stop offset="0.835" stop-color="#1d1b1d"/><stop offset="0.902" stop-color="#0e0e0f"/><stop offset="0.969" stop-color="#000000"/></linearGradient><linearGradient id="p19" x1="0" y1="0" x2="0" y2="1"><stop offset="0.031" stop-color="#ffb9c8"/><stop offset="0.098" stop-color="#e1acba"/><stop offset="0.165" stop-color="#c49fac"/><stop offset="0.232" stop-color="#a6929d"/><stop offset="0.299" stop-color="#90848f"/><stop offset="0.366" stop-color="#827781"/><stop offset="0.433" stop-color="#736a72"/><stop offset="0.500" stop-color="#655d64"/><stop offset="0.567" stop-color="#564f56"/><stop offset="0.634" stop-color="#484247"/><stop offset="0.701" stop-color="#3a3539"/><stop offset="0.768" stop-color="#2b282b"/><stop offset="0.835" stop-color="#1d1a1d"/><stop offset="0.902" stop-color="#0e0d0e"/><stop offset="0.969" stop-color="#000000"/></linearGradient><linearGradient id="p20" x1="0" y1="0" x2="0" y2="1"><stop offset="0.031" stop-color="#ffb5c4"/><stop offset="0.098" stop-color="#e1a8b6"/><stop offset="0.165" stop-color="#c49ba8"/><stop offset="0.232" stop-color="#a68e9a"/><stop offset="0.299" stop-color="#90818c"/><stop offset="0.366" stop-color="#82757e"/><stop offset="0.433" stop-color="#736870"/><stop offset="0.500" stop-color="#655b62"/><stop offset="0.567" stop-color="#564e54"/><stop offset="0.634" stop-color="#484146"/><stop offset="0.701" stop-color="#3a3438"/><stop offset="0.768" stop-color="#2b272a"/><stop offset="0.835" stop-color="#1d1a1c"/><stop offset="0.902" stop-color="#0e0d0e"/><stop offset="0.969" stop-color="#000000"/></linearGradient><linearGradient id="p21" x1="0" y1="0" x2="0" y2="1"><stop offset="0.031" stop-color="#ffb1bf"/><stop offset="0.098" stop-color="#e1a5b2"/><stop offset="0.165" stop-color="#c498a4"/><stop offset="0.232" stop-color="#a68b96"/><stop offset="0.299" stop-color="#907f89"/><stop offset="0.366" stop-color="#82727b"/><stop offset="0.433" stop-color="#73656d"/><stop offset="0.500" stop-color="#655960"/><stop offset="0.567" stop-color="#564c52"/><stop offset="0.634" stop-color="#483f44"/><stop offset="0.701" stop-color="#3a3337"/><stop offset="0.768" stop-color="#2b2629"/><stop offset="0.835" stop-color="#1d191b"/><stop offset="0.902" stop-color="#0e0d0e"/><stop offset="0.969" stop-color="#000000"/></linearGradient><linearGradient id="p22" x1="0" y1="0" x2="0" y2="1"><stop offset="0.031" stop-color="#ffadbb"/><stop offset="0.098" stop-color="#e1a1ae"/><stop offset="0.165" stop-color="#c495a0"/><stop offset="0.232" stop-color="#a68893"/><stop offset="0.299" stop-color="#907c86"/><stop offset="0.366" stop-color="#826f78"/><stop offset="0.433" stop-color="#73636b"/><stop offset="0.500" stop-color="#65575e"/><stop offset="0.567" stop-color="#564a50"/><stop offset="0.634" stop-color="#483e43"/><stop offset="0.701" stop-color="#3a3235"/><stop offset="0.768" stop-color="#2b2528"/><stop offset="0.835" stop-color="#1d191b"/><stop offset="0.902" stop-color="#0e0c0d"/><stop offset="0.969" stop-color="#000000"/></linearGradient><linearGradient id="p23" x1="0" y1="0" x2="0" y2="1"><stop offset="0.031" stop-color="#ffa9b7"/><stop offset="0.098" stop-color="#e19daa"/><stop offset="0.165" stop-color="#c4919d"/><stop offset="0.232" stop-color="#a68590"/><stop offset="0.299" stop-color="#907983"/><stop offset="0.366" stop-color="#826d76"/><stop offset="0.433" stop-color="#736169"/><stop offset="0.500" stop-color="#65555b"/><stop offset="0.567" stop-color="#56494e"/><stop offset="0.634" stop-color="#483c41"/><stop offset="0.701" stop-color="#3a3034"/><stop offset="0.768" stop-color="#2b2427"/><stop offset="0.835" stop-color="#1d181a"/><stop offset="0.902" stop-color="#0e0c0d"/><stop offset="0.969" stop-color="#000000"/></linearGradient><linearGradient id="p24" x1="0" y1="0" x2="0" y2="1"><stop offset="0.031" stop-color="#ffa5b3"/><stop offset="0.098" stop-color="#e19aa6"/><stop offset="0.165" stop-color="#c48e99"/><stop offset="0.232" stop-color="#a6828c"/><stop offset="0.299" stop-color="#907680"/><stop offset="0.366" stop-color="#826a73"/><stop offset="0.433" stop-color="#735e66"/><stop offset="0.500" stop-color="#655359"/><stop offset="0.567" stop-color="#56474d"/><stop offset="0.634" stop-color="#483b40"/><stop offset="0.701" stop-color="#3a2f33"/><stop offset="0.768" stop-color="#2b2326"/><stop offset="0.835" stop-color="#1d181a"/><stop offset="0.902" stop-color="#0e0c0d"/><stop offset="0.969" stop-color="#000000"/></linearGradient><linearGradient id="p25" x1="0" y1="0" x2="0" y2="1"><stop offset="0.031" stop-color="#ffa1ae"/><stop offset="0.098" stop-color="#e196a2"/><stop offset="0.165" stop-color="#c48a95"/><stop offset="0.232" stop-color="#a67f89"/><stop offset="0.299" stop-color="#90737c"/><stop offset="0.366" stop-color="#826870"/><stop offset="0.433" stop-color="#735c64"/><stop offset="0.500" stop-color="#655157"/><stop offset="0.567" stop-color="#56454b"/><stop offset="0.634" stop-color="#483a3e"/><stop offset="0.701" stop-color="#3a2e32"/><stop offset="0.768" stop-color="#2b2325"/><stop offset="0.835" stop-color="#1d1719"/><stop offset="0.902" stop-color="#0e0c0c"/><stop offset="0.969" stop-color="#000000"/></linearGradient><linearGradient id="p26" x1="0" y1="0" x2="0" y2="1"><stop offset="0.031" stop-color="#ff9daa"/><stop offset="0.098" stop-color="#e1929e"/><stop offset="0.165" stop-color="#c48792"/><stop offset="0.232" stop-color="#a67c86"/><stop offset="0.299" stop-color="#907079"/><stop offset="0.366" stop-color="#82656d"/><stop offset="0.433" stop-color="#735a61"/><stop offset="0.500" stop-color="#654f55"/><stop offset="0.567" stop-color="#564349"/><stop offset="0.634" stop-color="#48383d"/><stop offset="0.701" stop-color="#3a2d31"/><stop offset="0.768" stop-color="#2b2224"/><stop offset="0.835" stop-color="#1d1618"/><stop offset="0.902" stop-color="#0e0b0c"/><stop offset="0.969" stop-color="#000000"/></linearGradient><linearGradient id="p27" x1="0" y1="0" x2="0" y2="1"><stop offset="0.031" stop-color="#ff99a6"/><stop offset="0.098" stop-color="#e18e9a"/><stop offset="0.165" stop-color="#c4838e"/><stop offset="0.232" stop-color="#a67982"/><stop offset="0.299" stop-color="#906e76"/><stop offset="0.366" stop-color="#82636b"/><stop offset="0.433" stop-color="#73585f"/><stop offset="0.500" stop-color="#654d53"/><stop offset="0.567" stop-color="#564247"/><stop offset="0.634" stop-color="#48373b"/><stop offset="0.701" stop-color="#3a2c2f"/><stop offset="0.768" stop-color="#2b2124"/><stop offset="0.835" stop-color="#1d1618"/><stop offset="0.902" stop-color="#0e0b0c"/><stop offset="0.969" stop-color="#000000"/></linearGradient><linearGradient id="p28" x1="0" y1="0" x2="0" y2="1"><stop offset="0.031" stop-color="#ff95a1"/><stop offset="0.098" stop-color="#e18b96"/><stop offset="0.165" stop-color="#c4808a"/><stop offset="0.232" stop-color="#a6757f"/><stop offset="0.299" stop-color="#906b73"/><stop offset="0.366" stop-color="#826068"/><stop offset="0.433" stop-color="#73555c"/><stop offset="0.500" stop-color="#654b51"/><stop offset="0.567" stop-color="#564045"/><stop offset="0.634" stop-color="#48353a"/><stop offset="0.701" stop-color="#3a2b2e"/><stop offset="0.768" stop-color="#2b2023"/><stop offset="0.835" stop-color="#1d1517"/><stop offset="0.902" stop-color="#0e0b0c"/><stop offset="0.969" stop-color="#000000"/></linearGradient><linearGradient id="p29" x1="0" y1="0" x2="0" y2="1"><stop offset="0.031" stop-color="#ff919d"/><stop offset="0.098" stop-color="#e18792"/><stop offset="0.165" stop-color="#c47d87"/><stop offset="0.232" stop-color="#a6727b"/><stop offset="0.299" stop-color="#906870"/><stop offset="0.366" stop-color="#825d65"/><stop offset="0.433" stop-color="#73535a"/><stop offset="0.500" stop-color="#65494f"/><stop offset="0.567" stop-color="#563e43"/><stop offset="0.634" stop-color="#483438"/><stop offset="0.701" stop-color="#3a2a2d"/><stop offset="0.768" stop-color="#2b1f22"/><stop offset="0.835" stop-color="#1d1516"/><stop offset="0.902" stop-color="#0e0a0b"/><stop offset="0.969" stop-color="#000000"/></linearGradient><linearGradient id="p30" x1="0" y1="0" x2="0" y2="1"><stop offset="0.031" stop-color="#ff8d99"/><stop offset="0.098" stop-color="#e1838e"/><stop offset="0.165" stop-color="#c47983"/><stop offset="0.232" stop-color="#a66f78"/><stop offset="0.299" stop-color="#90656d"/><stop offset="0.366" stop-color="#825b62"/><stop offset="0.433" stop-color="#735157"/><stop offset="0.500" stop-color="#65474c"/><stop offset="0.567" stop-color="#563d41"/><stop offset="0.634" stop-color="#483337"/><stop offset="0.701" stop-color="#3a282c"/><stop offset="0.768" stop-color="#2b1e21"/><stop offset="0.835" stop-color="#1d1416"/><stop offset="0.902" stop-color="#0e0a0b"/><stop offset="0.969" stop-color="#000000"/></linearGradient><linearGradient id="p31" x1="0" y1="0" x2="0" y2="1"><stop offset="0.031" stop-color="#ff8994"/><stop offset="0.098" stop-color="#e1808a"/><stop offset="0.165" stop-color="#c4767f"/><stop offset="0.232" stop-color="#a66c75"/><stop offset="0.299" stop-color="#90626a"/><stop offset="0.366" stop-color="#82585f"/><stop offset="0.433" stop-color="#734f55"/><stop offset="0.500" stop-color="#65454a"/><stop offset="0.567" stop-color="#563b40"/><stop offset="0.634" stop-color="#483135"/><stop offset="0.701" stop-color="#3a272a"/><stop offset="0.768" stop-color="#2b1d20"/><stop offset="0.835" stop-color="#1d1415"/><stop offset="0.902" stop-color="#0e0a0b"/><stop offset="0.969" stop-color="#000000"/></linearGradient><linearGradient id="p32" x1="0" y1="0" x2="0" y2="1"><stop offset="0.031" stop-color="#ff8590"/><stop offset="0.098" stop-color="#e17c86"/><stop offset="0.165" stop-color="#c4727c"/><stop offset="0.232" stop-color="#a66971"/><stop offset="0.299" stop-color="#905f67"/><stop offset="0.366" stop-color="#82565d"/><stop offset="0.433" stop-color="#734c52"/><stop offset="0.500" stop-color="#654348"/><stop offset="0.567" stop-color="#56393e"/><stop offset="0.634" stop-color="#483033"/><stop offset="0.701" stop-color="#3a2629"/><stop offset="0.768" stop-color="#2b1d1f"/><stop offset="0.835" stop-color="#1d1315"/><stop offset="0.902" stop-color="#0e0a0a"/><stop offset="0.969" stop-color="#000000"/></linearGradient><linearGradient id="p33" x1="0" y1="0" x2="0" y2="1"><stop offset="0.031" stop-color="#ff818c"/><stop offset="0.098" stop-color="#e17882"/><stop offset="0.165" stop-color="#c46f78"/><stop offset="0.232" stop-color="#a6666e"/><stop offset="0.299" stop-color="#905c64"/><stop offset="0.366" stop-color="#82535a"/><stop offset="0.433" stop-color="#734a50"/><stop offset="0.500" stop-color="#654146"/><stop offset="0.567" stop-color="#56373c"/><stop offset="0.634" stop-color="#482e32"/><stop offset="0.701" stop-color="#3a2528"/><stop offset="0.768" stop-color="#2b1c1e"/><stop offset="0.835" stop-color="#1d1214"/><stop offset="0.902" stop-color="#0e090a"/><stop offset="0.969" stop-color="#000000"/></linearGradient><linearGradient id="p34" x1="0" y1="0" x2="0" y2="1"><stop offset="0.031" stop-color="#ff7e88"/><stop offset="0.098" stop-color="#e1757e"/><stop offset="0.165" stop-color="#c46c74"/><stop offset="0.232" stop-color="#a6636b"/><stop offset="0.299" stop-color="#905a61"/><stop offset="0.366" stop-color="#825157"/><stop offset="0.433" stop-color="#73484d"/><stop offset="0.500" stop-color="#653f44"/><stop offset="0.567" stop-color="#56363a"/><stop offset="0.634" stop-color="#482d30"/><stop offset="0.701" stop-color="#3a2427"/><stop offset="0.768" stop-color="#2b1b1d"/><stop offset="0.835" stop-color="#1d1213"/><stop offset="0.902" stop-color="#0e090a"/><stop offset="0.969" stop-color="#000000"/></linearGradient><linearGradient id="p35" x1="0" y1="0" x2="0" y2="1"><stop offset="0.031" stop-color="#ff7a83"/><stop offset="0.098" stop-color="#e1717a"/><stop offset="0.165" stop-color="#c46870"/><stop offset="0.232" stop-color="#a65f67"/><stop offset="0.299" stop-color="#90575e"/><stop offset="0.366" stop-color="#824e54"/><stop offset="0.433" stop-color="#73454b"/><stop offset="0.500" stop-color="#653d42"/><stop offset="0.567" stop-color="#563438"/><stop offset="0.634" stop-color="#482b2f"/><stop offset="0.701" stop-color="#3a2325"/><stop offset="0.768" stop-color="#2b1a1c"/><stop offset="0.835" stop-color="#1d1113"/><stop offset="0.902" stop-color="#0e0909"/><stop offset="0.969" stop-color="#000000"/></linearGradient><linearGradient id="p36" x1="0" y1="0" x2="0" y2="1"><stop offset="0.031" stop-color="#ff767f"/><stop offset="0.098" stop-color="#e16d76"/><stop offset="0.165" stop-color="#c4656d"/><stop offset="0.232" stop-color="#a65c64"/><stop offset="0.299" stop-color="#90545b"/><stop offset="0.366" stop-color="#824c52"/><stop offset="0.433" stop-color="#734349"/><stop offset="0.500" stop-color="#653b3f"/><stop offset="0.567" stop-color="#563236"/><stop offset="0.634" stop-color="#482a2d"/><stop offset="0.701" stop-color="#3a2224"/><stop offset="0.768" stop-color="#2b191b"/><stop offset="0.835" stop-color="#1d1112"/><stop offset="0.902" stop-color="#0e0809"/><stop offset="0.969" stop-color="#000000"/></linearGradient><linearGradient id="p37" x1="0" y1="0" x2="0" y2="1"><stop offset="0.031" stop-color="#ff727b"/><stop offset="0.098" stop-color="#e16972"/><stop offset="0.165" stop-color="#c46169"/><stop offset="0.232" stop-color="#a65960"/><stop offset="0.299" stop-color="#905158"/><stop offset="0.366" stop-color="#82494f"/><stop offset="0.433" stop-color="#734146"/><stop offset="0.500" stop-color="#65393d"/><stop offset="0.567" stop-color="#563135"/><stop offset="0.634" stop-color="#48292c"/><stop offset="0.701" stop-color="#3a2023"/><stop offset="0.768" stop-color="#2b181a"/><stop offset="0.835" stop-color="#1d1012"/><stop offset="0.902" stop-color="#0e0809"/><stop offset="0.969" stop-color="#000000"/></linearGradient><linearGradient id="p38" x1="0" y1="0" x2="0" y2="1"><stop offset="0.031" stop-color="#ff6e76"/><stop offset="0.098" stop-color="#e1666e"/><stop offset="0.165" stop-color="#c45e65"/><stop offset="0.232" stop-color="#a6565d"/><stop offset="0.299" stop-color="#904e55"/><stop offset="0.366" stop-color="#82464c"/><stop offset="0.433" stop-color="#733f44"/><stop offset="0.500" stop-color="#65373b"/><stop offset="0.567" stop-color="#562f33"/><stop offset="0.634" stop-color="#48272a"/><stop offset="0.701" stop-color="#3a1f22"/><stop offset="0.768" stop-color="#2b1719"/><stop offset="0.835" stop-color="#1d1011"/><stop offset="0.902" stop-color="#0e0808"/><stop offset="0.969" stop-color="#000000"/></linearGradient><linearGradient id="p39" x1="0" y1="0" x2="0" y2="1"><stop offset="0.031" stop-color="#ff6a72"/><stop offset="0.098" stop-color="#e1626a"/><stop offset="0.165" stop-color="#c45b62"/><stop offset="0.232" stop-color="#a6535a"/><stop offset="0.299" stop-color="#904b51"/><stop offset="0.366" stop-color="#824449"/><stop offset="0.433" stop-color="#733c41"/><stop offset="0.500" stop-color="#653539"/><stop offset="0.567" stop-color="#562d31"/><stop offset="0.634" stop-color="#482629"/><stop offset="0.701" stop-color="#3a1e21"/><stop offset="0.768" stop-color="#2b1718"/><stop offset="0.835" stop-color="#1d0f10"/><stop offset="0.902" stop-color="#0e0808"/><stop offset="0.969" stop-color="#000000"/></linearGradient><linearGradient id="p40" x1="0" y1="0" x2="0" y2="1"><stop offset="0.031" stop-color="#ff666e"/><stop offset="0.098" stop-color="#e15e66"/><stop offset="0.165" stop-color="#c4575e"/><stop offset="0.232" stop-color="#a65056"/><stop offset="0.299" stop-color="#90494e"/><stop offset="0.366" stop-color="#824147"/><stop offset="0.433" stop-color="#733a3f"/><stop offset="0.500" stop-color="#653337"/><stop offset="0.567" stop-color="#562c2f"/><stop offset="0.634" stop-color="#482427"/><stop offset="0.701" stop-color="#3a1d1f"/><stop offset="0.768" stop-color="#2b1618"/><stop offset="0.835" stop-color="#1d0f10"/><stop offset="0.902" stop-color="#0e0708"/><stop offset="0.969" stop-color="#000000"/></linearGradient><linearGradient id="p41" x1="0" y1="0" x2="0" y2="1"><stop offset="0.031" stop-color="#ff6269"/><stop offset="0.098" stop-color="#e15b62"/><stop offset="0.165" stop-color="#c4545a"/><stop offset="0.232" stop-color="#a64d53"/><stop offset="0.299" stop-color="#90464b"/><stop offset="0.366" stop-color="#823f44"/><stop offset="0.433" stop-color="#73383c"/><stop offset="0.500" stop-color="#653135"/><stop offset="0.567" stop-color="#562a2d"/><stop offset="0.634" stop-color="#482326"/><stop offset="0.701" stop-color="#3a1c1e"/><stop offset="0.768" stop-color="#2b1517"/><stop offset="0.835" stop-color="#1d0e0f"/><stop offset="0.902" stop-color="#0e0708"/><stop offset="0.969" stop-color="#000000"/></linearGradient><linearGradient id="p42" x1="0" y1="0" x2="0" y2="1"><stop offset="0.031" stop-color="#ff5e65"/><stop offset="0.098" stop-color="#e1575e"/><stop offset="0.165" stop-color="#c45057"/><stop offset="0.232" stop-color="#a64a4f"/><stop offset="0.299" stop-color="#904348"/><stop offset="0.366" stop-color="#823c41"/><stop offset="0.433" stop-color="#73363a"/><stop offset="0.500" stop-color="#652f33"/><stop offset="0.567" stop-color="#56282b"/><stop offset="0.634" stop-color="#482124"/><stop offset="0.701" stop-color="#3a1b1d"/><stop offset="0.768" stop-color="#2b1416"/><stop offset="0.835" stop-color="#1d0d0e"/><stop offset="0.902" stop-color="#0e0707"/><stop offset="0.969" stop-color="#000000"/></linearGradient><linearGradient id="p43" x1="0" y1="0" x2="0" y2="1"><stop offset="0.031" stop-color="#ff5a61"/><stop offset="0.098" stop-color="#e1535a"/><stop offset="0.165" stop-color="#c44d53"/><stop offset="0.232" stop-color="#a6464c"/><stop offset="0.299" stop-color="#904045"/><stop offset="0.366" stop-color="#823a3e"/><stop offset="0.433" stop-color="#733337"/><stop offset="0.500" stop-color="#652d30"/><stop offset="0.567" stop-color="#562629"/><stop offset="0.634" stop-color="#482023"/><stop offset="0.701" stop-color="#3a1a1c"/><stop offset="0.768" stop-color="#2b1315"/><stop offset="0.835" stop-color="#1d0d0e"/><stop offset="0.902" stop-color="#0e0607"/><stop offset="0.969" stop-color="#000000"/></linearGradient><linearGradient id="p44" x1="0" y1="0" x2="0" y2="1"><stop offset="0.031" stop-color="#ff565d"/><stop offset="0.098" stop-color="#e15056"/><stop offset="0.165" stop-color="#c4494f"/><stop offset="0.232" stop-color="#a64349"/><stop offset="0.299" stop-color="#903d42"/><stop offset="0.366" stop-color="#82373b"/><stop offset="0.433" stop-color="#733135"/><stop offset="0.500" stop-color="#652b2e"/><stop offset="0.567" stop-color="#562528"/><stop offset="0.634" stop-color="#481f21"/><stop offset="0.701" stop-color="#3a181a"/><stop offset="0.768" stop-color="#2b1214"/><stop offset="0.835" stop-color="#1d0c0d"/><stop offset="0.902" stop-color="#0e0607"/><stop offset="0.969" stop-color="#000000"/></linearGradient><linearGradient id="p45" x1="0" y1="0" x2="0" y2="1"><stop offset="0.031" stop-color="#ff5258"/><stop offset="0.098" stop-color="#e14c52"/><stop offset="0.165" stop-color="#c4464c"/><stop offset="0.232" stop-color="#a64045"/><stop offset="0.299" stop-color="#903a3f"/><stop offset="0.366" stop-color="#823539"/><stop offset="0.433" stop-color="#732f32"/><stop offset="0.500" stop-color="#65292c"/><stop offset="0.567" stop-color="#562326"/><stop offset="0.634" stop-color="#481d20"/><stop offset="0.701" stop-color="#3a1719"/><stop offset="0.768" stop-color="#2b1213"/><stop offset="0.835" stop-color="#1d0c0d"/><stop offset="0.902" stop-color="#0e0606"/><stop offset="0.969" stop-color="#000000"/></linearGradient><linearGradient id="p46" x1="0" y1="0" x2="0" y2="1"><stop offset="0.031" stop-color="#ff4e54"/><stop offset="0.098" stop-color="#e1484e"/><stop offset="0.165" stop-color="#c44348"/><stop offset="0.232" stop-color="#a63d42"/><stop offset="0.299" stop-color="#90373c"/><stop offset="0.366" stop-color="#823236"/><stop offset="0.433" stop-color="#732c30"/><stop offset="0.500" stop-color="#65272a"/><stop offset="0.567" stop-color="#562124"/><stop offset="0.634" stop-color="#481c1e"/><stop offset="0.701" stop-color="#3a1618"/><stop offset="0.768" stop-color="#2b1112"/><stop offset="0.835" stop-color="#1d0b0c"/><stop offset="0.902" stop-color="#0e0606"/><stop offset="0.969" stop-color="#000000"/></linearGradient><linearGradient id="p47" x1="0" y1="0" x2="0" y2="1"><stop offset="0.031" stop-color="#ff4a50"/><stop offset="0.098" stop-color="#e1444a"/><stop offset="0.165" stop-color="#c43f44"/><stop offset="0.232" stop-color="#a63a3f"/><stop offset="0.299" stop-color="#903539"/><stop offset="0.366" stop-color="#822f33"/><stop offset="0.433" stop-color="#732a2d"/><stop offset="0.500" stop-color="#652528"/><stop offset="0.567" stop-color="#562022"/><stop offset="0.634" stop-color="#481a1c"/><stop offset="0.701" stop-color="#3a1517"/><stop offset="0.768" stop-color="#2b1011"/><stop offset="0.835" stop-color="#1d0b0b"/><stop offset="0.902" stop-color="#0e0506"/><stop offset="0.969" stop-color="#000000"/></linearGradient><linearGradient id="p48" x1="0" y1="0" x2="0" y2="1"><stop offset="0.031" stop-color="#ff464b"/><stop offset="0.098" stop-color="#e14146"/><stop offset="0.165" stop-color="#c43c41"/><stop offset="0.232" stop-color="#a6373b"/><stop offset="0.299" stop-color="#903236"/><stop offset="0.366" stop-color="#822d30"/><stop offset="0.433" stop-color="#73282b"/><stop offset="0.500" stop-color="#652326"/><stop offset="0.567" stop-color="#561e20"/><stop offset="0.634" stop-color="#48191b"/><stop offset="0.701" stop-color="#3a1416"/><stop offset="0.768" stop-color="#2b0f10"/><stop offset="0.835" stop-color="#1d0a0b"/><stop offset="0.902" stop-color="#0e0505"/><stop offset="0.969" stop-color="#000000"/></linearGradient><linearGradient id="p49" x1="0" y1="0" x2="0" y2="1"><stop offset="0.031" stop-color="#ff4247"/><stop offset="0.098" stop-color="#e13d42"/><stop offset="0.165" stop-color="#c4383d"/><stop offset="0.232" stop-color="#a63438"/><stop offset="0.299" stop-color="#902f33"/><stop offset="0.366" stop-color="#822a2e"/><stop offset="0.433" stop-color="#732629"/><stop offset="0.500" stop-color="#652124"/><stop offset="0.567" stop-color="#561c1e"/><stop offset="0.634" stop-color="#481719"/><stop offset="0.701" stop-color="#3a1314"/><stop offset="0.768" stop-color="#2b0e0f"/><stop offset="0.835" stop-color="#1d090a"/><stop offset="0.902" stop-color="#0e0505"/><stop offset="0.969" stop-color="#000000"/></linearGradient><linearGradient id="p50" x1="0" y1="0" x2="0" y2="1"><stop offset="0.031" stop-color="#ff3e43"/><stop offset="0.098" stop-color="#e1393e"/><stop offset="0.165" stop-color="#c43539"/><stop offset="0.232" stop-color="#a63134"/><stop offset="0.299" stop-color="#902c30"/><stop offset="0.366" stop-color="#82282b"/><stop offset="0.433" stop-color="#732326"/><stop offset="0.500" stop-color="#651f21"/><stop offset="0.567" stop-color="#561a1d"/><stop offset="0.634" stop-color="#481618"/><stop offset="0.701" stop-color="#3a1213"/><stop offset="0.768" stop-color="#2b0d0e"/><stop offset="0.835" stop-color="#1d090a"/><stop offset="0.902" stop-color="#0e0405"/><stop offset="0.969" stop-color="#000000"/></linearGradient><linearGradient id="p51" x1="0" y1="0" x2="0" y2="1"><stop offset="0.031" stop-color="#ff3a3e"/><stop offset="0.098" stop-color="#e1363a"/><stop offset="0.165" stop-color="#c43235"/><stop offset="0.232" stop-color="#a62d31"/><stop offset="0.299" stop-color="#90292d"/><stop offset="0.366" stop-color="#822528"/><stop offset="0.433" stop-color="#732124"/><stop offset="0.500" stop-color="#651d1f"/><stop offset="0.567" stop-color="#56191b"/><stop offset="0.634" stop-color="#481516"/><stop offset="0.701" stop-color="#3a1112"/><stop offset="0.768" stop-color="#2b0c0d"/><stop offset="0.835" stop-color="#1d0809"/><stop offset="0.902" stop-color="#0e0404"/><stop offset="0.969" stop-color="#000000"/></linearGradient><linearGradient id="p52" x1="0" y1="0" x2="0" y2="1"><stop offset="0.031" stop-color="#ff363a"/><stop offset="0.098" stop-color="#e13236"/><stop offset="0.165" stop-color="#c42e32"/><stop offset="0.232" stop-color="#a62a2e"/><stop offset="0.299" stop-color="#902629"/><stop offset="0.366" stop-color="#822325"/><stop offset="0.433" stop-color="#731f21"/><stop offset="0.500" stop-color="#651b1d"/><stop offset="0.567" stop-color="#561719"/><stop offset="0.634" stop-color="#481315"/><stop offset="0.701" stop-color="#3a0f11"/><stop offset="0.768" stop-color="#2b0c0c"/><stop offset="0.835" stop-color="#1d0808"/><stop offset="0.902" stop-color="#0e0404"/><stop offset="0.969" stop-color="#000000"/></linearGradient><linearGradient id="p53" x1="0" y1="0" x2="0" y2="1"><stop offset="0.031" stop-color="#ff3236"/><stop offset="0.098" stop-color="#e12e32"/><stop offset="0.165" stop-color="#c42b2e"/><stop offset="0.232" stop-color="#a6272a"/><stop offset="0.299" stop-color="#902426"/><stop offset="0.366" stop-color="#822023"/><stop offset="0.433" stop-color="#731c1f"/><stop offset="0.500" stop-color="#65191b"/><stop offset="0.567" stop-color="#561517"/><stop offset="0.634" stop-color="#481213"/><stop offset="0.701" stop-color="#3a0e0f"/><stop offset="0.768" stop-color="#2b0b0c"/><stop offset="0.835" stop-color="#1d0708"/><stop offset="0.902" stop-color="#0e0404"/><stop offset="0.969" stop-color="#000000"/></linearGradient><linearGradient id="p54" x1="0" y1="0" x2="0" y2="1"><stop offset="0.031" stop-color="#ff2e31"/><stop offset="0.098" stop-color="#e12b2e"/><stop offset="0.165" stop-color="#c4272a"/><stop offset="0.232" stop-color="#a62427"/><stop offset="0.299" stop-color="#902123"/><stop offset="0.366" stop-color="#821d20"/><stop offset="0.433" stop-color="#731a1c"/><stop offset="0.500" stop-color="#651719"/><stop offset="0.567" stop-color="#561415"/><stop offset="0.634" stop-color="#481012"/><stop offset="0.701" stop-color="#3a0d0e"/><stop offset="0.768" stop-color="#2b0a0b"/><stop offset="0.835" stop-color="#1d0707"/><stop offset="0.902" stop-color="#0e0304"/><stop offset="0.969" stop-color="#000000"/></linearGradient><linearGradient id="p55" x1="0" y1="0" x2="0" y2="1"><stop offset="0.031" stop-color="#ff2a2d"/><stop offset="0.098" stop-color="#e1272a"/><stop offset="0.165" stop-color="#c42427"/><stop offset="0.232" stop-color="#a62124"/><stop offset="0.299" stop-color="#901e20"/><stop offset="0.366" stop-color="#821b1d"/><stop offset="0.433" stop-color="#73181a"/><stop offset="0.500" stop-color="#651517"/><stop offset="0.567" stop-color="#561213"/><stop offset="0.634" stop-color="#480f10"/><stop offset="0.701" stop-color="#3a0c0d"/><stop offset="0.768" stop-color="#2b090a"/><stop offset="0.835" stop-color="#1d0606"/><stop offset="0.902" stop-color="#0e0303"/><stop offset="0.969" stop-color="#000000"/></linearGradient><linearGradient id="p56" x1="0" y1="0" x2="0" y2="1"><stop offset="0.031" stop-color="#ff2629"/><stop offset="0.098" stop-color="#e12326"/><stop offset="0.165" stop-color="#c42023"/><stop offset="0.232" stop-color="#a61e20"/><stop offset="0.299" stop-color="#901b1d"/><stop offset="0.366" stop-color="#82181a"/><stop offset="0.433" stop-color="#731617"/><stop offset="0.500" stop-color="#651314"/><stop offset="0.567" stop-color="#561012"/><stop offset="0.634" stop-color="#480e0f"/><stop offset="0.701" stop-color="#3a0b0c"/><stop offset="0.768" stop-color="#2b0809"/><stop offset="0.835" stop-color="#1d0506"/><stop offset="0.902" stop-color="#0e0303"/><stop offset="0.969" stop-color="#000000"/></linearGradient><linearGradient id="p57" x1="0" y1="0" x2="0" y2="1"><stop offset="0.031" stop-color="#ff2225"/><stop offset="0.098" stop-color="#e11f22"/><stop offset="0.165" stop-color="#c41d1f"/><stop offset="0.232" stop-color="#a61b1d"/><stop offset="0.299" stop-color="#90181a"/><stop offset="0.366" stop-color="#821618"/><stop offset="0.433" stop-color="#731315"/><stop offset="0.500" stop-color="#651112"/><stop offset="0.567" stop-color="#560f10"/><stop offset="0.634" stop-color="#480c0d"/><stop offset="0.701" stop-color="#3a0a0a"/><stop offset="0.768" stop-color="#2b0708"/><stop offset="0.835" stop-color="#1d0505"/><stop offset="0.902" stop-color="#0e0203"/><stop offset="0.969" stop-color="#000000"/></linearGradient><linearGradient id="p58" x1="0" y1="0" x2="0" y2="1"><stop offset="0.031" stop-color="#ff1e20"/><stop offset="0.098" stop-color="#e11c1e"/><stop offset="0.165" stop-color="#c41a1c"/><stop offset="0.232" stop-color="#a61719"/><stop offset="0.299" stop-color="#901517"/><stop offset="0.366" stop-color="#821315"/><stop offset="0.433" stop-color="#731112"/><stop offset="0.500" stop-color="#650f10"/><stop offset="0.567" stop-color="#560d0e"/><stop offset="0.634" stop-color="#480b0c"/><stop offset="0.701" stop-color="#3a0909"/><stop offset="0.768" stop-color="#2b0607"/><stop offset="0.835" stop-color="#1d0405"/><stop offset="0.902" stop-color="#0e0202"/><stop offset="0.969" stop-color="#000000"/></linearGradient><linearGradient id="p59" x1="0" y1="0" x2="0" y2="1"><stop offset="0.031" stop-color="#ff1a1c"/><stop offset="0.098" stop-color="#e1181a"/><stop offset="0.165" stop-color="#c41618"/><stop offset="0.232" stop-color="#a61416"/><stop offset="0.299" stop-color="#901214"/><stop offset="0.366" stop-color="#821112"/><stop offset="0.433" stop-color="#730f10"/><stop offset="0.500" stop-color="#650d0e"/><stop offset="0.567" stop-color="#560b0c"/><stop offset="0.634" stop-color="#48090a"/><stop offset="0.701" stop-color="#3a0708"/><stop offset="0.768" stop-color="#2b0606"/><stop offset="0.835" stop-color="#1d0404"/><stop offset="0.902" stop-color="#0e0202"/><stop offset="0.969" stop-color="#000000"/></linearGradient><linearGradient id="p60" x1="0" y1="0" x2="0" y2="1"><stop offset="0.031" stop-color="#ff1618"/><stop offset="0.098" stop-color="#e11416"/><stop offset="0.165" stop-color="#c41314"/><stop offset="0.232" stop-color="#a61113"/><stop offset="0.299" stop-color="#901011"/><stop offset="0.366" stop-color="#820e0f"/><stop offset="0.433" stop-color="#730d0e"/><stop offset="0.500" stop-color="#650b0c"/><stop offset="0.567" stop-color="#56090a"/><stop offset="0.634" stop-color="#480808"/><stop offset="0.701" stop-color="#3a0607"/><stop offset="0.768" stop-color="#2b0505"/><stop offset="0.835" stop-color="#1d0303"/><stop offset="0.902" stop-color="#0e0202"/><stop offset="0.969" stop-color="#000000"/></linearGradient><linearGradient id="p61" x1="0" y1="0" x2="0" y2="1"><stop offset="0.031" stop-color="#ff1213"/><stop offset="0.098" stop-color="#e11112"/><stop offset="0.165" stop-color="#c40f11"/><stop offset="0.232" stop-color="#a60e0f"/><stop offset="0.299" stop-color="#900d0e"/><stop offset="0.366" stop-color="#820c0c"/><stop offset="0.433" stop-color="#730a0b"/><stop offset="0.500" stop-color="#65090a"/><stop offset="0.567" stop-color="#560808"/><stop offset="0.634" stop-color="#480607"/><stop offset="0.701" stop-color="#3a0506"/><stop offset="0.768" stop-color="#2b0404"/><stop offset="0.835" stop-color="#1d0303"/><stop offset="0.902" stop-color="#0e0101"/><stop offset="0.969" stop-color="#000000"/></linearGradient><linearGradient id="p62" x1="0" y1="0" x2="0" y2="1"><stop offset="0.031" stop-color="#ff0e0f"/><stop offset="0.098" stop-color="#e10d0e"/><stop offset="0.165" stop-color="#c40c0d"/><stop offset="0.232" stop-color="#a60b0c"/><stop offset="0.299" stop-color="#900a0b"/><stop offset="0.366" stop-color="#82090a"/><stop offset="0.433" stop-color="#730809"/><stop offset="0.500" stop-color="#650708"/><stop offset="0.567" stop-color="#560606"/><stop offset="0.634" stop-color="#480505"/><stop offset="0.701" stop-color="#3a0404"/><stop offset="0.768" stop-color="#2b0303"/><stop offset="0.835" stop-color="#1d0202"/><stop offset="0.902" stop-color="#0e0101"/><stop offset="0.969" stop-color="#000000"/></linearGradient><linearGradient id="p63" x1="0" y1="0" x2="0" y2="1"><stop offset="0.031" stop-color="#ff0a0b"/><stop offset="0.098" stop-color="#e1090a"/><stop offset="0.165" stop-color="#c40909"/><stop offset="0.232" stop-color="#a60808"/><stop offset="0.299" stop-color="#900708"/><stop offset="0.366" stop-color="#820607"/><stop offset="0.433" stop-color="#730606"/><stop offset="0.500" stop-color="#650505"/><stop offset="0.567" stop-color="#560405"/><stop offset="0.634" stop-color="#480404"/><stop offset="0.701" stop-color="#3a0303"/><stop offset="0.768" stop-color="#2b0202"/><stop offset="0.835" stop-color="#1d0102"/><stop offset="0.902" stop-color="#0e0101"/><stop offset="0.969" stop-color="#000000"/></linearGradient><linearGradient id="p64" x1="0" y1="0" x2="0" y2="1"><stop offset="0.031" stop-color="#ff0606"/><stop offset="0.098" stop-color="#e10606"/><stop offset="0.165" stop-color="#c40506"/><stop offset="0.232" stop-color="#a60505"/><stop offset="0.299" stop-color="#900405"/><stop offset="0.366" stop-color="#820404"/><stop offset="0.433" stop-color="#730304"/><stop offset="0.500" stop-color="#650303"/><stop offset="0.567" stop-color="#560303"/><stop offset="0.634" stop-color="#480202"/><stop offset="0.701" stop-color="#3a0202"/><stop offset="0.768" stop-color="#2b0101"/><stop offset="0.835" stop-color="#1d0101"/><stop offset="0.902" stop-color="#0e0000"/><stop offset="0.969" stop-color="#000000"/></linearGradient><linearGradient id="p65" x1="0" y1="0" x2="0" y2="1"><stop offset="0.031" stop-color="#ff0202"/><stop offset="0.098" stop-color="#e10202"/><stop offset="0.165" stop-color="#c40202"/><stop offset="0.232" stop-color="#a60202"/><stop offset="0.299" stop-color="#900102"/><stop offset="0.366" stop-color="#820101"/><stop offset="0.433" stop-color="#730101"/><stop offset="0.500" stop-color="#650101"/><stop offset="0.567" stop-color="#560101"/><stop offset="0.634" stop-color="#480101"/><stop offset="0.701" stop-color="#3a0101"/><stop offset="0.768" stop-color="#2b0000"/><stop offset="0.835" stop-color="#1d0000"/><stop offset="0.902" stop-color="#0e0000"/><stop offset="0.969" stop-color="#000000"/></linearGradient><linearGradient id="p66" x1="0" y1="0" x2="0" y2="1"><stop offset="0.031" stop-color="#ff0000"/><stop offset="0.098" stop-color="#e10000"/><stop offset="0.165" stop-color="#c40000"/><stop offset="0.232" stop-color="#a60000"/><stop offset="0.299" stop-color="#900000"/><stop offset="0.366" stop-color="#820000"/><stop offset="0.433" stop-color="#730000"/><stop offset="0.500" stop-color="#650000"/><stop offset="0.567" stop-color="#560000"/><stop offset="0.634" stop-color="#480000"/><stop offset="0.701" stop-color="#3a0000"/><stop offset="0.768" stop-color="#2b0000"/><stop offset="0.835" stop-color="#1d0000"/><stop offset="0.902" stop-color="#0e0000"/><stop offset="0.969" stop-color="#000000"/></linearGradient><linearGradient id="p67" x1="0" y1="0" x2="0" y2="1"><stop offset="0.031" stop-color="#ff0000"/><stop offset="0.098" stop-color="#e10000"/><stop offset="0.165" stop-color="#c40000"/><stop offset="0.232" stop-color="#a60000"/><stop offset="0.299" stop-color="#900000"/><stop offset="0.366" stop-color="#820000"/><stop offset="0.433" stop-color="#730000"/><stop offset="0.500" stop-color="#650000"/><stop offset="0.567" stop-color="#560000"/><stop offset="0.634" stop-color="#480000"/><stop offset="0.701" stop-color="#3a0000"/><stop offset="0.768" stop-color="#2b0000"/><stop offset="0.835" stop-color="#1d0000"/><stop offset="0.902" stop-color="#0e0000"/><stop offset="0.969" stop-color="#000000"/></linearGradient></defs><rect x="0" y="0" width="3" height="191" fill="url(#p0)"/><rect x="3" y="0" width="3" height="191" fill="url(#p1)"/><rect x="6" y="0" width="3" height="191" fill="url(#p2)"/><rect x="9" y="0" width="3" height="191" fill="url(#p3)"/><rect x="12" y="0" width="3" height="191" fill="url(#p4)"/><rect x="15" y="0" width="3" height="191" fill="url(#p5)"/><rect x="18" y="0" width="3" height="191" fill="url(#p6)"/><rect x="21" y="0" width="3" height="191" fill="url(#p7)"/><rect x="24" y="0" width="3" height="191" fill="url(#p8)"/><rect x="27" y="0" width="3" height="191" fill="url(#p9)"/><rect x="30" y="0" width="3" height="191" fill="url(#p10)"/><rect x="33" y="0" width="3" height="191" fill="url(#p11)"/><rect x="36" y="0" width="3" height="191" fill="url(#p12)"/><rect x="39" y="0" width="3" height="191" fill="url(#p13)"/><rect x="42" y="0" width="3" height="191" fill="url(#p14)"/><rect x="45" y="0" width="3" height="191" fill="url(#p15)"/><rect x="48" y="0" width="3" height="191" fill="url(#p16)"/><rect x="51" y="0" width="3" height="191" fill="url(#p17)"/><rect x="54" y="0" width="3" height="191" fill="url(#p18)"/><rect x="57" y="0" width="3" height="191" fill="url(#p19)"/><rect x="60" y="0" width="3" height="191" fill="url(#p20)"/><rect x="63" y="0" width="3" height="191" fill="url(#p21)"/><rect x="66" y="0" width="3" height="191" fill="url(#p22)"/><rect x="69" y="0" width="3" height="191" fill="url(#p23)"/><rect x="72" y="0" width="3" height="191" fill="url(#p24)"/><rect x="75" y="0" width="3" height="191" fill="url(#p25)"/><rect x="78" y="0" width="3" height="191" fill="url(#p26)"/><rect x="81" y="0" width="3" height="191" fill="url(#p27)"/><rect x="84" y="0" width="3" height="191" fill="url(#p28)"/><rect x="87" y="0" width="3" height="191" fill="url(#p29)"/><rect x="90" y="0" width="3" height="191" fill="url(#p30)"/><rect x="93" y="0" width="3" height="191" fill="url(#p31)"/><rect x="96" y="0" width="3" height="191" fill="url(#p32)"/><rect x="99" y="0" width="3" height="191" fill="url(#p33)"/><rect x="102" y="0" width="3" height="191" fill="url(#p34)"/><rect x="105" y="0" width="3" height="191" fill="url(#p35)"/><rect x="108" y="0" width="3" height="191" fill="url(#p36)"/><rect x="111" y="0" width="3" height="191" fill="url(#p37)"/><rect x="114" y="0" width="3" height="191" fill="url(#p38)"/><rect x="117" y="0" width="3" height="191" fill="url(#p39)"/><rect x="120" y="0" width="3" height="191" fill="url(#p40)"/><rect x="123" y="0" width="3" height="191" fill="url(#p41)"/><rect x="126" y="0" width="3" height="191" fill="url(#p42)"/><rect x="129" y="0" width="3" height="191" fill="url(#p43)"/><rect x="132" y="0" width="3" height="191" fill="url(#p44)"/><rect x="135" y="0" width="3" height="191" fill="url(#p45)"/><rect x="138" y="0" width="3" height="191" fill="url(#p46)"/><rect x="141" y="0" width="3" height="191" fill="url(#p47)"/><rect x="144" y="0" width="3" height="191" fill="url(#p48)"/><rect x="147" y="0" width="3" height="191" fill="url(#p49)"/><rect x="150" y="0" width="3" height="191" fill="url(#p50)"/><rect x="153" y="0" width="3" height="191" fill="url(#p51)"/><rect x="156" y="0" width="3" height="191" fill="url(#p52)"/><rect x="159" y="0" width="3" height="191" fill="url(#p53)"/><rect x="162" y="0" width="3" height="191" fill="url(#p54)"/><rect x="165" y="0" width="3" height="191" fill="url(#p55)"/><rect x="168" y="0" width="3" height="191" fill="url(#p56)"/><rect x="171" y="0" width="3" height="191" fill="url(#p57)"/><rect x="174" y="0" width="3" height="191" fill="url(#p58)"/><rect x="177" y="0" width="3" height="191" fill="url(#p59)"/><rect x="180" y="0" width="3" height="191" fill="url(#p60)"/><rect x="183" y="0" width="3" height="191" fill="url(#p61)"/><rect x="186" y="0" width="3" height="191" fill="url(#p62)"/><rect x="189" y="0" width="3" height="191" fill="url(#p63)"/><rect x="192" y="0" width="3" height="191" fill="url(#p64)"/><rect x="195" y="0" width="3" height="191" fill="url(#p65)"/><rect x="198" y="0" width="3" height="191" fill="url(#p66)"/><rect x="201" y="0" width="3" height="191" fill="url(#p67)"/></svg></div><div style="left:321px;top:483px;width:21px;height:179px;background:linear-gradient(to bottom,#ff0000 0.00%,#ff002e 2.78%,#ff005c 5.56%,#ff008a 8.33%,#ff00b8 11.11%,#ff00e2 13.89%,#ff00ff 16.67%,#ba00ff 19.44%,#8600ff 22.22%,#6500ff 25.00%,#4300ff 27.78%,#2200ff 30.56%,#0000ff 33.33%,#002bff 36.11%,#0055ff 38.89%,#0080ff 41.67%,#00aaff 44.44%,#00d4ff 47.22%,#00ffff 50.00%,#00ffe2 52.78%,#00ffb8 55.56%,#00ff8a 58.33%,#00ff5c 61.11%,#00ff2e 63.89%,#00ff00 66.67%,#22ff00 69.44%,#43ff00 72.22%,#65ff00 75.00%,#86ff00 77.78%,#baff00 80.56%,#ffff00 83.33%,#ffd400 86.11%,#ffaa00 88.89%,#ff8000 91.67%,#ff5500 94.44%,#ff2b00 97.22%,#ff0000 100.00%)"></div><svg style="left:123px;top:654px" width="13" height="13"><path d="M0.5 6.5H12 M6.5 0.5V12.5" stroke="rgba(150,180,190,.75)" stroke-width="1" fill="none" shape-rendering="crispEdges"/></svg>
<svg style="left:134px;top:622px" width="26" height="26" viewBox="134 622 26 26"><defs><linearGradient id="cg" x1="139" y1="636" x2="151" y2="627" gradientUnits="userSpaceOnUse"><stop offset="0" stop-color="#ffe62e"/><stop offset=".45" stop-color="#ffc21c"/><stop offset="1" stop-color="#ffa012"/></linearGradient><filter id="cb" x="-20%" y="-20%" width="140%" height="140%"><feGaussianBlur stdDeviation="0.7"/></filter></defs><path d="M139.3 627.0L150.3 627.1L147.9 630.5L155.0 642.4L141.9 635.6L139.5 637.7Z" fill="#05080a" stroke="#05080a" stroke-width="2.0" stroke-linejoin="round" filter="url(#cb)" opacity=".95"/><path d="M139.3 627.0L150.3 627.1L147.9 630.5L155.0 642.4L141.9 635.6L139.5 637.7Z" fill="url(#cg)"/></svg>
</body></html>
